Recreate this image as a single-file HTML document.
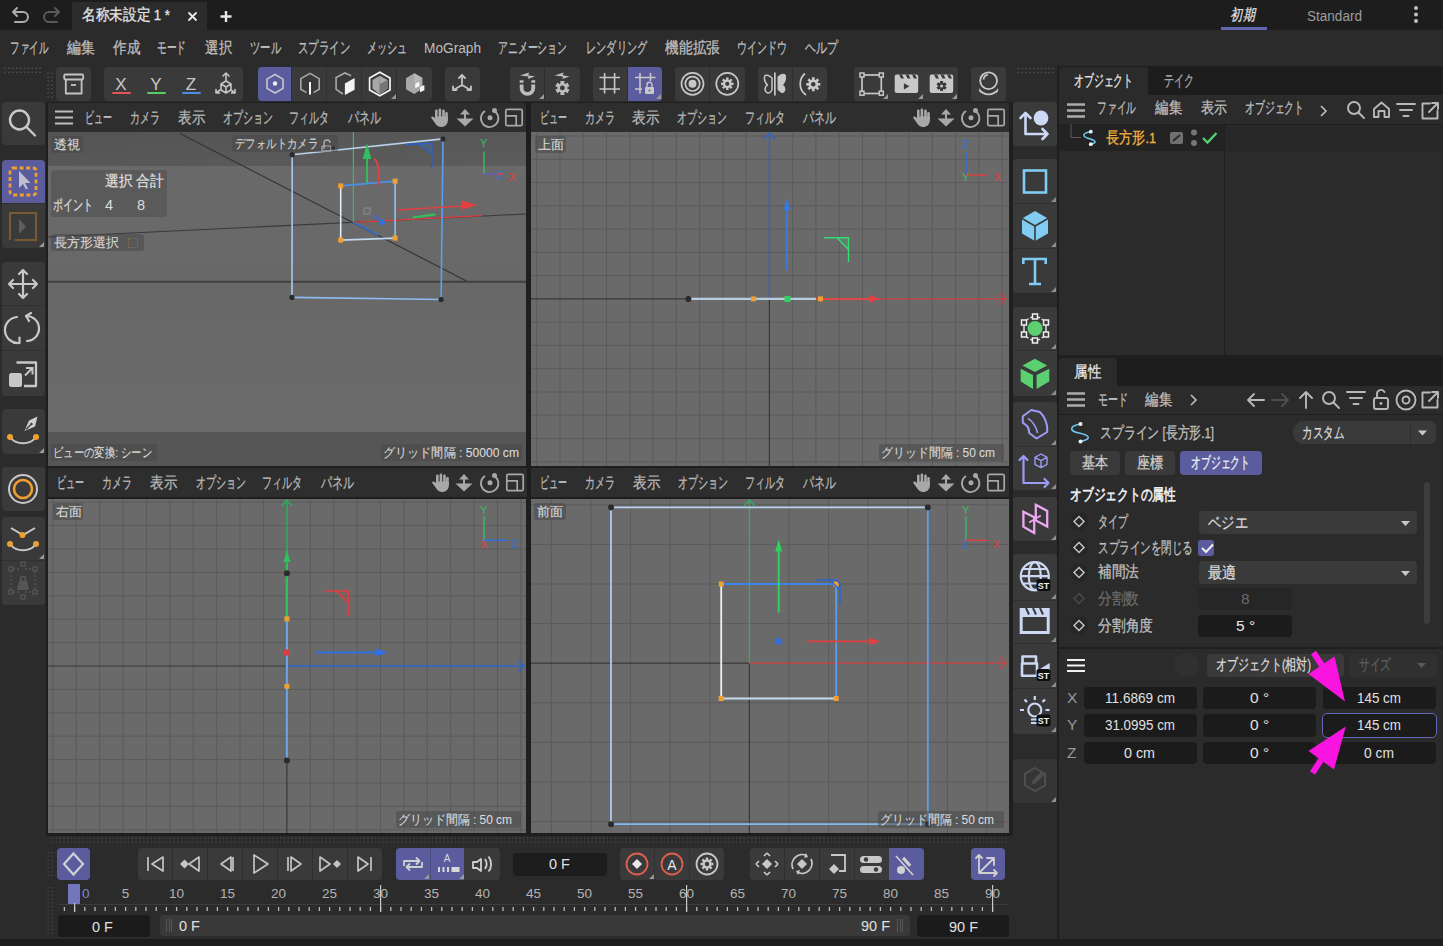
<!DOCTYPE html>
<html><head><meta charset="utf-8">
<style>
*{box-sizing:border-box;margin:0;padding:0}
html,body{width:1443px;height:946px;overflow:hidden;background:#2b2b2b;font-family:"Liberation Sans",sans-serif;color:#bebebe;font-size:15.5px}
.a{position:absolute}
.t{position:absolute;white-space:nowrap;line-height:14px;transform-origin:0 50%;-webkit-text-stroke:0.3px currentColor}
svg{position:absolute;overflow:visible}
.grp{position:absolute;background:#3a3a3a;border-radius:4px;overflow:hidden}
.act{position:absolute;top:0;bottom:0;background:#5a5c9e}
.sep{position:absolute;top:0;bottom:0;width:1px;background:#303030}
.vh{position:absolute;background:#2e2e2e;height:29px}
.vc{position:absolute;background:#666;overflow:hidden}
.fw{width:var(--w);overflow:hidden;height:20px;margin-top:-3px;padding-top:3px}
.lbl .t{-webkit-text-stroke:0.1px currentColor}
.lbl{position:absolute;background:rgba(70,70,70,.5);border-radius:3px;color:#dadada;font-size:13px;line-height:17px;height:17px;padding:0 3px;white-space:nowrap}
.corner{position:absolute;width:0;height:0;border-style:solid;border-width:0 0 6px 6px;border-color:transparent transparent #9a9a9a transparent}
</style></head>
<body>
<!-- TITLE BAR -->
<div class="a" style="left:0;top:0;width:1443px;height:30px;background:#1d1d1d"></div>
<div class="a" style="left:72px;top:2px;width:135px;height:28px;background:#2b2b2b"></div>
<svg style="left:0;top:0" width="240" height="30">
 <g fill="none" stroke="#acacac" stroke-width="2" stroke-linecap="round" stroke-linejoin="round">
  <path d="M14 12 h9 a5 5 0 0 1 0 10 h-8"/><path d="M17 8 l-4 4 l4 4"/>
 </g>
 <g fill="none" stroke="#5a5a5a" stroke-width="2" stroke-linecap="round" stroke-linejoin="round">
  <path d="M58 12 h-9 a5 5 0 0 0 0 10 h8"/><path d="M55 8 l4 4 l-4 4"/>
 </g>
 <path d="M189 13 l7 7 M196 13 l-7 7" stroke="#e8e8e8" stroke-width="1.8" stroke-linecap="round"/>
 <path d="M226 11 v11 M220.5 16.5 h11" stroke="#e8e8e8" stroke-width="2.4"/>
</svg>
<div class="t fw" style="left:82px;top:8px;font-size:15.5px;color:#e4e4e4;--w:88px">名称未設定 1 *</div>
<div class="a" style="left:1231px;top:8px;width:30px;height:16px;transform:skewX(-12deg)"><div class="t fw" style="left:0;top:0;font-size:15.5px;color:#e0e0e0;--w:28px">初期</div></div>
<div class="a" style="left:1221px;top:27px;width:46px;height:3px;background:#6468b4"></div>
<div class="t fw" style="left:1307px;top:9px;font-size:15.5px;color:#9c9c9c;--w:55px;-webkit-text-stroke:0">Standard</div>
<svg style="left:1410px;top:4px" width="12" height="22"><g fill="#c0c0c0"><circle cx="6" cy="4" r="2"/><circle cx="6" cy="10.5" r="2"/><circle cx="6" cy="17" r="2"/></g></svg>

<!-- MENU BAR -->
<div class="a" style="left:0;top:30px;width:1443px;height:36px;background:#2b2b2b"></div>
<div class="t fw" style="left:10px;top:41px;--w:38px">ファイル</div>
<div class="t fw" style="left:67px;top:41px;--w:28px">編集</div>
<div class="t fw" style="left:113px;top:41px;--w:27px">作成</div>
<div class="t fw" style="left:157px;top:41px;--w:29px">モード</div>
<div class="t fw" style="left:205px;top:41px;--w:27px">選択</div>
<div class="t fw" style="left:250px;top:41px;--w:31px">ツール</div>
<div class="t fw" style="left:298px;top:41px;--w:52px">スプライン</div>
<div class="t fw" style="left:367px;top:41px;--w:40px">メッシュ</div>
<div class="t fw" style="left:424px;top:41px;--w:57px">MoGraph</div>
<div class="t fw" style="left:498px;top:41px;--w:69px">アニメーション</div>
<div class="t fw" style="left:586px;top:41px;--w:61px">レンダリング</div>
<div class="t fw" style="left:665px;top:41px;--w:55px">機能拡張</div>
<div class="t fw" style="left:737px;top:41px;--w:50px">ウインドウ</div>
<div class="t fw" style="left:805px;top:41px;--w:33px">ヘルプ</div>
<!-- TOOLBAR -->
<div class="a" style="left:0;top:66px;width:1443px;height:37px;background:#2b2b2b"></div>
<svg style="left:0;top:64px" width="1060" height="40">
 <g fill="#4e4e4e">
  <path d="M4.30 3.6h1.5v1.5h-1.5zM4.30 7.6h1.5v1.5h-1.5zM8.20 3.6h1.5v1.5h-1.5zM8.20 7.6h1.5v1.5h-1.5zM12.10 3.6h1.5v1.5h-1.5zM12.10 7.6h1.5v1.5h-1.5zM16.00 3.6h1.5v1.5h-1.5zM16.00 7.6h1.5v1.5h-1.5zM19.90 3.6h1.5v1.5h-1.5zM19.90 7.6h1.5v1.5h-1.5zM23.80 3.6h1.5v1.5h-1.5zM23.80 7.6h1.5v1.5h-1.5zM27.70 3.6h1.5v1.5h-1.5zM27.70 7.6h1.5v1.5h-1.5zM31.60 3.6h1.5v1.5h-1.5zM31.60 7.6h1.5v1.5h-1.5zM35.50 3.6h1.5v1.5h-1.5zM35.50 7.6h1.5v1.5h-1.5zM39.40 3.6h1.5v1.5h-1.5zM39.40 7.6h1.5v1.5h-1.5zM47.3 8.5h1.5v1.5h-1.5zM51.3 8.5h1.5v1.5h-1.5zM47.3 12.4h1.5v1.5h-1.5zM51.3 12.4h1.5v1.5h-1.5zM47.3 16.3h1.5v1.5h-1.5zM51.3 16.3h1.5v1.5h-1.5zM47.3 20.2h1.5v1.5h-1.5zM51.3 20.2h1.5v1.5h-1.5zM47.3 24.1h1.5v1.5h-1.5zM51.3 24.1h1.5v1.5h-1.5zM47.3 28.0h1.5v1.5h-1.5zM51.3 28.0h1.5v1.5h-1.5zM47.3 31.9h1.5v1.5h-1.5zM51.3 31.9h1.5v1.5h-1.5zM1017.80 3.8h1.5v1.5h-1.5zM1017.80 7.8h1.5v1.5h-1.5zM1021.63 3.8h1.5v1.5h-1.5zM1021.63 7.8h1.5v1.5h-1.5zM1025.46 3.8h1.5v1.5h-1.5zM1025.46 7.8h1.5v1.5h-1.5zM1029.29 3.8h1.5v1.5h-1.5zM1029.29 7.8h1.5v1.5h-1.5zM1033.12 3.8h1.5v1.5h-1.5zM1033.12 7.8h1.5v1.5h-1.5zM1036.95 3.8h1.5v1.5h-1.5zM1036.95 7.8h1.5v1.5h-1.5zM1040.78 3.8h1.5v1.5h-1.5zM1040.78 7.8h1.5v1.5h-1.5zM1044.61 3.8h1.5v1.5h-1.5zM1044.61 7.8h1.5v1.5h-1.5zM1048.44 3.8h1.5v1.5h-1.5zM1048.44 7.8h1.5v1.5h-1.5zM1052.27 3.8h1.5v1.5h-1.5zM1052.27 7.8h1.5v1.5h-1.5z"/>
 </g>
</svg>
<div class="grp" style="left:56px;top:67px;width:35px;height:34px"></div>
<div class="grp" style="left:104px;top:67px;width:139px;height:34px"></div>
<div class="grp" style="left:258px;top:67px;width:174px;height:34px"><div class="act" style="left:0;width:33px"></div><div class="sep" style="left:33px"></div><div class="sep" style="left:68px"></div><div class="sep" style="left:103px"></div><div class="sep" style="left:138px"></div></div>
<div class="grp" style="left:445px;top:67px;width:35px;height:34px"></div>
<div class="grp" style="left:510px;top:67px;width:70px;height:34px"><div class="sep" style="left:34px"></div></div>
<div class="grp" style="left:593px;top:67px;width:69px;height:34px"><div class="act" style="left:34px;width:35px"></div><div class="sep" style="left:34px"></div></div>
<div class="grp" style="left:675px;top:67px;width:70px;height:34px"><div class="sep" style="left:34px"></div></div>
<div class="grp" style="left:758px;top:67px;width:69px;height:34px"><div class="sep" style="left:34px"></div></div>
<div class="grp" style="left:854px;top:67px;width:104px;height:34px"></div>
<div class="grp" style="left:971px;top:67px;width:35px;height:34px"></div>
<svg style="left:0;top:64px" width="1060" height="40">
 <g fill="none" stroke="#c4c4c4" stroke-width="1.8" stroke-linejoin="round">
  <!-- archive -->
  <rect x="64.2" y="10.5" width="19" height="5" rx="1.2"/><path d="M65.8 15.5v14h15.8v-14"/><path d="M71 21h5"/>
 </g>
 <!-- XYZ -->
 <g font-family="Liberation Sans" font-size="17" fill="#c8c8c8" text-anchor="middle">
  <text x="121" y="26">X</text><text x="156" y="26">Y</text><text x="191" y="26">Z</text>
 </g>
 <rect x="112" y="28" width="19" height="2" rx="1" fill="#e05555"/>
 <rect x="147" y="28" width="19" height="2" rx="1" fill="#55cc66"/>
 <rect x="182" y="28" width="19" height="2" rx="1" fill="#4a8fe0"/>
 <g fill="none" stroke="#c4c4c4" stroke-width="1.6" stroke-linejoin="round" stroke-linecap="round">
  <path d="M226 9v8M223 12l3-3 3 3"/>
  <path d="M221 20l5-3 5 3v6l-5 3-5-3z M221 20l5 3 5-3 M226 23v6"/>
  <path d="M220 26l-4 3M231 26l4 3M216 29h3.5M216 29v-3.5M235 29h-3.5M235 29v-3.5"/>
 </g>
 <!-- mode icons -->
 <g fill="none" stroke="#c8c8c8" stroke-width="1.6">
  <path d="M275 10.5l8 4.6v9.3l-8 4.6-8-4.6v-9.3z"/>
 </g>
 <circle cx="275" cy="19.5" r="2.2" fill="#f0f0f0"/>
 <g fill="none" stroke="#a8a8a8" stroke-width="1.6">
  <path d="M306.5 28.6L300.8 25.3V14.6L310 9.3L319.2 14.6V25.3L313.5 28.6"/>
  <path d="M351.2 11.7L344.9 9L336.1 13.6V25.3L342.9 30"/>
 </g>
 <rect x="309" y="18" width="2" height="12.6" fill="#f4f4f4"/>
 <path d="M344.9 19.5L354.6 14.1V25.8L344.9 31.1z" fill="#f4f4f4"/>
 <path d="M379.8 8.2L390 14.1V25.9L379.8 31.8L369.6 25.9V14.1z" fill="none" stroke="#f4f4f4" stroke-width="1.7"/>
 <path d="M379.8 11.7L372.5 15.9V24.4L379.8 30.6z" fill="#a8a8a8"/><path d="M379.8 11.7L387.5 15.9V24.4L379.8 30.6z" fill="#a8a8a8"/>
 <path d="M379.8 20L387.5 15.9V24.4L379.8 30.6z" fill="#767676"/>
 <path d="M414.3 9.3L422.5 14V24.6L414.3 30.1L406 25.3V14.3z" fill="#a8a8a8"/>
 <path d="M415.2 19.5L419.5 17.5V22.3L415.2 24.3z" fill="#f4f4f4"/><path d="M420 22.9L424.4 20.9V26.2L420 28.2z" fill="#f4f4f4"/>
 <path d="M414.3 9.3L422.5 14L414.3 18.7z" fill="#b8b8b8"/>
 <!-- axis -->
 <g fill="none" stroke="#c4c4c4" stroke-width="1.8" stroke-linecap="round" stroke-linejoin="round">
  <path d="M462 11v10l-8.5 5M462 21l8.5 5M459 14l3-3 3 3M453 22.5v3.5h3.5M471 22.5v3.5h-3.5"/>
 </g>
 <!-- magnet -->
 <path d="M521.6 20.4v3.6a5.8 5.8 0 0 0 11.6 0v-3.6" fill="none" stroke="#bdbdbd" stroke-width="3.8"/>
 <path d="M519.7 16.3h3.8v2.4h-3.8zM531.4 16.3h3.8v2.4h-3.8z" fill="#bdbdbd"/>
 <path d="M520 11.6L529 8.5L528.3 11.2L535 12.6L527.8 15L528.5 12.6z" fill="#bdbdbd"/>
 <path d="M564.22 28.56 L564.47 30.90 L560.33 30.90 L560.58 28.56 L559.27 27.80 L557.38 29.20 L555.30 25.60 L557.46 24.66 L557.46 23.14 L555.30 22.20 L557.38 18.60 L559.27 20.00 L560.58 19.24 L560.33 16.90 L564.47 16.90 L564.22 19.24 L565.53 20.00 L567.42 18.60 L569.50 22.20 L567.34 23.14 L567.34 24.66 L569.50 25.60 L567.42 29.20 L565.53 27.80zM564.8 23.9a2.4 2.4 0 1 0 -4.8 0a2.4 2.4 0 1 0 4.8 0z" fill="#bdbdbd" fill-rule="evenodd"/>
 <path d="M554.5 11.6L563.5 8.5L562.8 11.2L569.5 12.6L562.3 15L563 12.6z" fill="#bdbdbd"/>
 <!-- grid -->
 <g stroke="#c8c8c8" stroke-width="1.6" fill="none">
  <path d="M599.5 13.5h20.5M599.5 25h20.5M604.6 9v20.5M614.6 9v20.5"/>
  <path d="M635 13.5h20.5M635 25h7M640 9v20.5M650.5 9v8"/>
 </g>
 <rect x="645" y="23" width="9" height="7" rx="1" fill="#c8c8c8"/><path d="M647 23v-2.2a2.5 2.5 0 0 1 5 0v2.2" fill="none" stroke="#c8c8c8" stroke-width="1.4"/><circle cx="649.5" cy="26.5" r="1" fill="#5a5c9e"/>
 <!-- rings -->
 <g fill="none" stroke="#c8c8c8" stroke-width="1.7">
  <circle cx="692.5" cy="19.8" r="11"/><circle cx="692.5" cy="19.8" r="7.2"/>
  <circle cx="727.3" cy="19.8" r="11"/>
 </g>
 <circle cx="692.5" cy="19.8" r="4" fill="#c8c8c8"/>
 <path d="M731.55 18.67 L733.58 18.55 L733.58 21.05 L731.55 20.93 L731.10 22.01 L732.62 23.36 L730.86 25.12 L729.51 23.60 L728.43 24.05 L728.55 26.08 L726.05 26.08 L726.17 24.05 L725.09 23.60 L723.74 25.12 L721.98 23.36 L723.50 22.01 L723.05 20.93 L721.02 21.05 L721.02 18.55 L723.05 18.67 L723.50 17.59 L721.98 16.24 L723.74 14.48 L725.09 16.00 L726.17 15.55 L726.05 13.52 L728.55 13.52 L728.43 15.55 L729.51 16.00 L730.86 14.48 L732.62 16.24 L731.10 17.59zM729.4 19.8a2.1 2.1 0 1 0 -4.2 0a2.1 2.1 0 1 0 4.2 0z" fill="#c8c8c8" fill-rule="evenodd"/>
 <!-- symmetry -->
 <rect x="774" y="8.5" width="1.7" height="23" fill="#c8c8c8"/>
 <path d="M772 14c-3-3-7-4-7.5-1s1 6 3 8c-2 1-3 4-2 6s3 3 5 1c1-1 1.5-2 1.5-3z" fill="none" stroke="#c8c8c8" stroke-width="1.5" stroke-linejoin="round"/>
 <path d="M777.5 13c2-3 8-5 8.5-1s-1 7-3 9c2 1 3 4 2 6s-3 3-5 1c-1-1-2.5-2-2.5-3z" fill="#c8c8c8"/>
 <path d="M805 9.5c-6 5-7 16 1 21.5" fill="none" stroke="#c8c8c8" stroke-width="1.7"/>
 <path d="M818.13 19.02 L820.36 18.90 L820.36 21.70 L818.13 21.58 L817.62 22.81 L819.29 24.30 L817.30 26.29 L815.81 24.62 L814.58 25.13 L814.70 27.36 L811.90 27.36 L812.02 25.13 L810.79 24.62 L809.30 26.29 L807.31 24.30 L808.98 22.81 L808.47 21.58 L806.24 21.70 L806.24 18.90 L808.47 19.02 L808.98 17.79 L807.31 16.30 L809.30 14.31 L810.79 15.98 L812.02 15.47 L811.90 13.24 L814.70 13.24 L814.58 15.47 L815.81 15.98 L817.30 14.31 L819.29 16.30 L817.62 17.79zM815.5999999999999 20.3a2.3 2.3 0 1 0 -4.6 0a2.3 2.3 0 1 0 4.6 0z" fill="#c8c8c8" fill-rule="evenodd"/>
 <!-- render -->
 <g fill="none" stroke="#c8c8c8" stroke-width="1.7"><rect x="862" y="11" width="19.3" height="18.5"/></g>
 <g fill="#3a3a3a" stroke="#c8c8c8" stroke-width="1.5"><rect x="860" y="9" width="4" height="4"/><rect x="879.3" y="9" width="4" height="4"/><rect x="860" y="27.2" width="4" height="4"/><rect x="879.3" y="27.2" width="4" height="4"/></g>
 <rect x="894.7" y="10.6" width="23.5" height="18.3" rx="2" fill="#c8c8c8"/>
 <path d="M899 10.6h3l2 4h-3zM905.5 10.6h3l2 4h-3zM912 10.6h3l2 4h-3z" fill="#3a3a3a"/>
 <path d="M903.9 19.2l5.6 3.1-5.6 3.1z" fill="#3a3a3a"/>
 <rect x="929.7" y="10.6" width="23.5" height="18.3" rx="2" fill="#c8c8c8"/>
 <path d="M934 10.6h3l2 4h-3zM940.5 10.6h3l2 4h-3zM947 10.6h3l2 4h-3z" fill="#3a3a3a"/>
 <path d="M942.94 25.45 L943.11 27.08 L940.09 27.08 L940.26 25.45 L939.29 24.89 L937.95 25.84 L936.45 23.24 L937.94 22.56 L937.94 21.44 L936.45 20.76 L937.95 18.16 L939.29 19.11 L940.26 18.55 L940.09 16.92 L943.11 16.92 L942.94 18.55 L943.91 19.11 L945.25 18.16 L946.75 20.76 L945.26 21.44 L945.26 22.56 L946.75 23.24 L945.25 25.84 L943.91 24.89zM943.1 22a1.5 1.5 0 1 0 -3.0 0a1.5 1.5 0 1 0 3.0 0z" fill="#3a3a3a" fill-rule="evenodd"/>
 <!-- sphere -->
 <g fill="none" stroke="#c8c8c8" stroke-width="1.8"><circle cx="988.6" cy="16.7" r="8.4"/><path d="M983.5 15.5a5.5 5.5 0 0 1 4.5-4.8"/></g>
 <path d="M979 24.2Q988.6 35 998.2 24.2Q998.5 27 997 28.5Q988.6 34 980.2 28.5Q978.7 27 979 24.2z" fill="#c8c8c8"/>
 <!-- corner marks -->
 <path d="M391 35l5-5v5z M539 35l5-5v5z M656 35l5-5v5z M883 35l5-5v5z M918 35l5-5v5z M952 35l5-5v5z" fill="#9a9a9a"/>
</svg>
<!-- LEFT TOOLBAR -->
<div class="a" style="left:0;top:103px;width:47px;height:835px;background:#2b2b2b"></div>
<div class="grp" style="left:2px;top:102px;width:43px;height:43px"></div>
<div class="grp" style="left:2px;top:160px;width:43px;height:88px"><div class="act" style="left:0;right:0;top:0;bottom:auto;height:43px"></div><div class="a" style="left:0;right:0;top:43px;height:1px;background:#303030"></div></div>
<div class="grp" style="left:2px;top:262px;width:43px;height:134px"><div class="a" style="left:0;right:0;top:43px;height:1px;background:#303030"></div><div class="a" style="left:0;right:0;top:88px;height:1px;background:#303030"></div></div>
<div class="grp" style="left:2px;top:409px;width:43px;height:45px"></div>
<div class="grp" style="left:2px;top:467px;width:43px;height:44px"></div>
<div class="grp" style="left:2px;top:517px;width:43px;height:88px"><div class="a" style="left:0;right:0;top:43px;height:1px;background:#303030"></div></div>
<svg style="left:0;top:0" width="47" height="620">
 <g fill="none" stroke="#c8c8c8" stroke-width="2.4" stroke-linecap="round">
  <circle cx="19.5" cy="120" r="9.5"/><path d="M26.5 127l8.5 8.5"/>
 </g>
 <!-- select -->
 <rect x="10" y="168" width="26" height="27" rx="3" fill="none" stroke="#f0a030" stroke-width="2.8" stroke-dasharray="4 2.6"/>
 <path d="M19 171v17l4-4 3 5.5 2-1-3-5.5h5.5z" fill="#c0c0cc"/>
 <g fill="none" stroke="#7a5a30" stroke-width="2"><path d="M10 240V213h27M36 213v27H15"/></g>
 <path d="M19 219v15l7-7.5z" fill="#5e5e5e"/>
 <!-- move -->
 <g fill="none" stroke="#c8c8c8" stroke-width="2.2" stroke-linecap="round" stroke-linejoin="round">
  <path d="M23 270v28M9 284h28M19 274l4-4 4 4M19 294l4 4 4-4M13 280l-4 4 4 4M33 280l4 4-4 4"/>
 </g>
 <!-- rotate -->
 <g fill="none" stroke="#c8c8c8" stroke-width="2.2" stroke-linecap="round" stroke-linejoin="round">
  <path d="M17 317a12 12 0 0 0 2 26M27 341a12 12 0 0 0 -1 -25"/><path d="M14 343h5.5v-5.5M31 313l-5 3 3 5" />
 </g>
 <!-- scale -->
 <path d="M16.5 362.5h19.5v23.5h-12" fill="none" stroke="#c8c8c8" stroke-width="2.3" stroke-linejoin="round"/>
 <rect x="9" y="373" width="13" height="14" rx="2.5" fill="#c8c8c8"/>
 <path d="M25 375.5l7-7M26 368h6.5v6.5" fill="none" stroke="#c8c8c8" stroke-width="2"/>
 <!-- pen -->
 <path d="M37.5 416.5L29 420.5L24.5 431L35 426.5z" fill="#d0d0d0"/>
 <path d="M26 429.5l5-5" stroke="#3a3a3a" stroke-width="1.2"/><circle cx="31.5" cy="424" r="1.2" fill="#3a3a3a"/>
 <path d="M11 438c5 7 19 7 24 0" fill="none" stroke="#c8c8c8" stroke-width="2"/>
 <circle cx="10" cy="437" r="3" fill="#f0a030"/><circle cx="36" cy="437" r="3" fill="#f0a030"/>
 <!-- ring -->
 <circle cx="23" cy="489" r="14" fill="none" stroke="#c8c8c8" stroke-width="2"/>
 <circle cx="23" cy="489" r="9" fill="none" stroke="#f0a030" stroke-width="2.6"/>
 <!-- bezier -->
 <path d="M11 528l12 7 12-7" fill="none" stroke="#c8c8c8" stroke-width="2"/>
 <circle cx="22.5" cy="535" r="3" fill="#f0a030"/>
 <path d="M11 545c5 7 19 7 24 0" fill="none" stroke="#c8c8c8" stroke-width="2"/>
 <circle cx="10" cy="544" r="3" fill="#f0a030"/><circle cx="36" cy="544" r="3" fill="#f0a030"/>
 <!-- weight (dim) -->
 <g fill="none" stroke="#555" stroke-width="1.3"><rect x="9" y="567" width="4" height="4"/><rect x="33" y="567" width="4" height="4"/><rect x="9" y="590" width="4" height="4"/><rect x="33" y="590" width="4" height="4"/><rect x="21" y="562" width="4" height="4"/><rect x="21" y="595" width="4" height="4"/><path d="M11 571v19M35 571v19M13 569h8M25 569h8M13 592h8M25 592h8" stroke-dasharray="2 2"/></g>
 <path d="M17 590l2-9h8l2 9z" fill="#555"/><circle cx="23" cy="579" r="2.5" fill="none" stroke="#555" stroke-width="1.5"/>
 <path d="M39 247l5-5v5z M39 453l5-5v5z M39 559l5-5v5z" fill="#9a9a9a"/>
</svg>
<!-- VIEWPORTS -->
<div class="a" style="left:46px;top:102px;width:964px;height:734px;background:#1e1e1e"></div>
<div class="vh" style="left:48px;top:103px;width:478px"></div>
<div class="t fw" style="left:85px;top:110.5px;font-size:15.5px;color:#b8b8b8;--w:27px">ビュー</div>
<div class="t fw" style="left:130px;top:110.5px;font-size:15.5px;color:#b8b8b8;--w:30px">カメラ</div>
<div class="t fw" style="left:178px;top:110.5px;font-size:15.5px;color:#b8b8b8;--w:27px">表示</div>
<div class="t fw" style="left:223px;top:110.5px;font-size:15.5px;color:#b8b8b8;--w:50px">オプション</div>
<div class="t fw" style="left:289px;top:110.5px;font-size:15.5px;color:#b8b8b8;--w:40px">フィルタ</div>
<div class="t fw" style="left:348px;top:110.5px;font-size:15.5px;color:#b8b8b8;--w:33px">パネル</div>
<svg style="left:0;top:0" width="1" height="1"><path d="M55 111.5h18M55 117.5h18M55 123.5h18" stroke="#bdbdbd" stroke-width="2.2"/><g transform="translate(430 108.5)" fill="#a8a8a8"><rect x="5" y="1" width="2.6" height="10" rx="1.3"/><rect x="8.6" y="0" width="2.6" height="10" rx="1.3"/><rect x="12.2" y="1" width="2.6" height="10" rx="1.3"/><rect x="15.2" y="3.5" width="2.6" height="9" rx="1.3"/><path d="M5 8h12.8v4c0 4-3 6.5-6.5 6.5c-3 0-4.5-1.5-6-3.5l-4-5.5c-.6-.9.5-2 1.6-1.4l3 2z"/></g><path d="M465 109.0l-5 5.5h10z" fill="#a8a8a8"/><rect x="464" y="114.0" width="2" height="6" fill="#a8a8a8"/><path d="M456.5 118.5h17l-8.5 8z" fill="#a8a8a8"/><path d="M485 111.0a8.7 8.7 0 1 0 10 0.5" fill="none" stroke="#a8a8a8" stroke-width="1.8"/><circle cx="494.5" cy="110.5" r="2.5" fill="#a8a8a8"/><circle cx="490" cy="117.8" r="2.5" fill="#a8a8a8"/><rect x="505.8" y="109.3" width="16.4" height="16.4" rx="1.5" fill="none" stroke="#a8a8a8" stroke-width="1.7"/><path d="M506 115.9h10.2v9.6" fill="none" stroke="#a8a8a8" stroke-width="1.7"/></svg>
<div class="vh" style="left:531px;top:103px;width:478px"></div>
<div class="t fw" style="left:540px;top:110.5px;font-size:15.5px;color:#b8b8b8;--w:27px">ビュー</div>
<div class="t fw" style="left:585px;top:110.5px;font-size:15.5px;color:#b8b8b8;--w:30px">カメラ</div>
<div class="t fw" style="left:632px;top:110.5px;font-size:15.5px;color:#b8b8b8;--w:27px">表示</div>
<div class="t fw" style="left:677px;top:110.5px;font-size:15.5px;color:#b8b8b8;--w:50px">オプション</div>
<div class="t fw" style="left:745px;top:110.5px;font-size:15.5px;color:#b8b8b8;--w:40px">フィルタ</div>
<div class="t fw" style="left:803px;top:110.5px;font-size:15.5px;color:#b8b8b8;--w:33px">パネル</div>
<svg style="left:0;top:0" width="1" height="1"><g transform="translate(912 108.5)" fill="#a8a8a8"><rect x="5" y="1" width="2.6" height="10" rx="1.3"/><rect x="8.6" y="0" width="2.6" height="10" rx="1.3"/><rect x="12.2" y="1" width="2.6" height="10" rx="1.3"/><rect x="15.2" y="3.5" width="2.6" height="9" rx="1.3"/><path d="M5 8h12.8v4c0 4-3 6.5-6.5 6.5c-3 0-4.5-1.5-6-3.5l-4-5.5c-.6-.9.5-2 1.6-1.4l3 2z"/></g><path d="M946 109.0l-5 5.5h10z" fill="#a8a8a8"/><rect x="945" y="114.0" width="2" height="6" fill="#a8a8a8"/><path d="M937.5 118.5h17l-8.5 8z" fill="#a8a8a8"/><path d="M966 111.0a8.7 8.7 0 1 0 10 0.5" fill="none" stroke="#a8a8a8" stroke-width="1.8"/><circle cx="975.5" cy="110.5" r="2.5" fill="#a8a8a8"/><circle cx="971" cy="117.8" r="2.5" fill="#a8a8a8"/><rect x="987.8" y="109.3" width="16.4" height="16.4" rx="1.5" fill="none" stroke="#a8a8a8" stroke-width="1.7"/><path d="M988 115.9h10.2v9.6" fill="none" stroke="#a8a8a8" stroke-width="1.7"/></svg>
<div class="vh" style="left:48px;top:468px;width:479px"></div>
<div class="t fw" style="left:57px;top:475.5px;font-size:15.5px;color:#b8b8b8;--w:27px">ビュー</div>
<div class="t fw" style="left:102px;top:475.5px;font-size:15.5px;color:#b8b8b8;--w:30px">カメラ</div>
<div class="t fw" style="left:150px;top:475.5px;font-size:15.5px;color:#b8b8b8;--w:27px">表示</div>
<div class="t fw" style="left:196px;top:475.5px;font-size:15.5px;color:#b8b8b8;--w:50px">オプション</div>
<div class="t fw" style="left:262px;top:475.5px;font-size:15.5px;color:#b8b8b8;--w:40px">フィルタ</div>
<div class="t fw" style="left:321px;top:475.5px;font-size:15.5px;color:#b8b8b8;--w:33px">パネル</div>
<svg style="left:0;top:0" width="1" height="1"><g transform="translate(431 473.5)" fill="#a8a8a8"><rect x="5" y="1" width="2.6" height="10" rx="1.3"/><rect x="8.6" y="0" width="2.6" height="10" rx="1.3"/><rect x="12.2" y="1" width="2.6" height="10" rx="1.3"/><rect x="15.2" y="3.5" width="2.6" height="9" rx="1.3"/><path d="M5 8h12.8v4c0 4-3 6.5-6.5 6.5c-3 0-4.5-1.5-6-3.5l-4-5.5c-.6-.9.5-2 1.6-1.4l3 2z"/></g><path d="M464 474.0l-5 5.5h10z" fill="#a8a8a8"/><rect x="463" y="479.0" width="2" height="6" fill="#a8a8a8"/><path d="M455.5 483.5h17l-8.5 8z" fill="#a8a8a8"/><path d="M485 476.0a8.7 8.7 0 1 0 10 0.5" fill="none" stroke="#a8a8a8" stroke-width="1.8"/><circle cx="494.5" cy="475.5" r="2.5" fill="#a8a8a8"/><circle cx="490" cy="482.8" r="2.5" fill="#a8a8a8"/><rect x="506.8" y="474.3" width="16.4" height="16.4" rx="1.5" fill="none" stroke="#a8a8a8" stroke-width="1.7"/><path d="M507 480.9h10.2v9.6" fill="none" stroke="#a8a8a8" stroke-width="1.7"/></svg>
<div class="vh" style="left:531px;top:468px;width:478px"></div>
<div class="t fw" style="left:540px;top:475.5px;font-size:15.5px;color:#b8b8b8;--w:27px">ビュー</div>
<div class="t fw" style="left:585px;top:475.5px;font-size:15.5px;color:#b8b8b8;--w:30px">カメラ</div>
<div class="t fw" style="left:633px;top:475.5px;font-size:15.5px;color:#b8b8b8;--w:27px">表示</div>
<div class="t fw" style="left:678px;top:475.5px;font-size:15.5px;color:#b8b8b8;--w:50px">オプション</div>
<div class="t fw" style="left:745px;top:475.5px;font-size:15.5px;color:#b8b8b8;--w:40px">フィルタ</div>
<div class="t fw" style="left:803px;top:475.5px;font-size:15.5px;color:#b8b8b8;--w:33px">パネル</div>
<svg style="left:0;top:0" width="1" height="1"><g transform="translate(912 473.5)" fill="#a8a8a8"><rect x="5" y="1" width="2.6" height="10" rx="1.3"/><rect x="8.6" y="0" width="2.6" height="10" rx="1.3"/><rect x="12.2" y="1" width="2.6" height="10" rx="1.3"/><rect x="15.2" y="3.5" width="2.6" height="9" rx="1.3"/><path d="M5 8h12.8v4c0 4-3 6.5-6.5 6.5c-3 0-4.5-1.5-6-3.5l-4-5.5c-.6-.9.5-2 1.6-1.4l3 2z"/></g><path d="M946 474.0l-5 5.5h10z" fill="#a8a8a8"/><rect x="945" y="479.0" width="2" height="6" fill="#a8a8a8"/><path d="M937.5 483.5h17l-8.5 8z" fill="#a8a8a8"/><path d="M966 476.0a8.7 8.7 0 1 0 10 0.5" fill="none" stroke="#a8a8a8" stroke-width="1.8"/><circle cx="975.5" cy="475.5" r="2.5" fill="#a8a8a8"/><circle cx="971" cy="482.8" r="2.5" fill="#a8a8a8"/><rect x="987.8" y="474.3" width="16.4" height="16.4" rx="1.5" fill="none" stroke="#a8a8a8" stroke-width="1.7"/><path d="M988 480.9h10.2v9.6" fill="none" stroke="#a8a8a8" stroke-width="1.7"/></svg>

<div class="vc" style="left:48px;top:132px;width:478px;height:334px;background:#666"></div>
<div class="vc" style="left:531px;top:132px;width:478px;height:334px;background:#6a6a6a"></div>
<div class="vc" style="left:48px;top:499px;width:478px;height:334px;background:#6a6a6a"></div>
<div class="vc" style="left:531px;top:499px;width:478px;height:334px;background:#6a6a6a"></div>
<svg style="left:0;top:0" width="1443" height="946">
 <defs>
  <clipPath id="cp1"><rect x="48" y="132" width="478" height="334"/></clipPath>
  <clipPath id="cp2"><rect x="531" y="132" width="478" height="334"/></clipPath>
  <clipPath id="cp3"><rect x="48" y="499" width="478" height="334"/></clipPath>
  <clipPath id="cp4"><rect x="531" y="499" width="478" height="334"/></clipPath>
  <linearGradient id="pg1" x1="0" y1="0" x2="1" y2="1">
   <stop offset="0" stop-color="#545454"/><stop offset="1" stop-color="#5c5c5c"/>
  </linearGradient>
  <linearGradient id="pg2" x1="0" y1="0" x2="0" y2="1">
   <stop offset="0" stop-color="#6a6a6a"/><stop offset="0.5" stop-color="#686868"/><stop offset="1" stop-color="#6c6c6c"/>
  </linearGradient>
 </defs>
 <!-- PERSPECTIVE -->
 <g clip-path="url(#cp1)">
  <rect x="48" y="132" width="478" height="334" fill="url(#pg2)"/>
  <rect x="48" y="132" width="478" height="34" fill="url(#pg1)"/>
  <rect x="48" y="432" width="478" height="34" fill="#565656"/>
  <path d="M48 281.8H526" stroke="#404040" stroke-width="2"/>
  <path d="M180 133.6L466.5 281" stroke="#333" stroke-width="1.1"/>
  <path d="M48 237L526 214" stroke="#3a3a3a" stroke-width="1.1"/>
  <path d="M353.4 132V222.3" stroke="#35c060" stroke-width="1.2"/>
  <path d="M353.4 222.3L482 215.6" stroke="#e04040" stroke-width="1.2"/>
  <path d="M353.4 222.3L378 235" stroke="#3070e0" stroke-width="1.5"/>
  <g fill="none" stroke-width="1.6">
   <path d="M292.2 154.7L443 138.9" stroke="#b8d0e8"/>
   <path d="M443 138.9L441.1 299.5" stroke="#5aa0ee"/>
   <path d="M441.1 299.5L292 297.4" stroke="#8cbcf0"/>
   <path d="M292 297.4L292.2 154.7" stroke="#a8c8ee"/>
   <path d="M340.7 185.9L395.1 181.1" stroke="#4a90e8"/>
   <path d="M395.1 181.1L395.1 238.1" stroke="#90c0f0"/>
   <path d="M395.1 238.1L340.7 240.1" stroke="#c0d8f0"/>
   <path d="M340.7 240.1L340.7 185.9" stroke="#e0ecf8"/>
  </g>
  <g fill="#2a2a2a"><circle cx="292.2" cy="154.7" r="2.6"/><circle cx="443" cy="138.9" r="2.6"/><circle cx="441.1" cy="299.5" r="2.6"/><circle cx="292" cy="297.4" r="2.6"/></g>
  <g fill="#f0a030"><rect x="338.2" y="183.4" width="5" height="5"/><rect x="392.6" y="178.6" width="5" height="5"/><rect x="392.6" y="235.6" width="5" height="5"/><rect x="338.2" y="237.6" width="5" height="5"/></g>
  <path d="M367 183V155" stroke="#30c060" stroke-width="1.8"/><path d="M367 143l-4.3 16h8.6z" fill="#30c060"/>
  <path d="M374.5 158.5c3 3 4.5 8 4.3 26.5" fill="none" stroke="#e04040" stroke-width="2"/>
  <path d="M397 210L462 206" stroke="#e04040" stroke-width="1.6"/><path d="M477.5 205l-16-4.5v9.5z" fill="#e04040"/>
  <path d="M412.6 217.5L435.4 214.4" stroke="#30c060" stroke-width="2.2"/>
  <path d="M373 215.1L382 222.3" stroke="#3070e0" stroke-width="1.6"/><circle cx="382.1" cy="222.3" r="2.8" fill="#3070e0"/>
  <rect x="364" y="208" width="6" height="6" fill="none" stroke="#8a8a8a" stroke-width="1.1"/>
  <g fill="none" stroke="#2860d0" stroke-width="1.5"><path d="M405.4 144.4L431.8 143.2V168.4M419.8 144.4L431.8 154"/></g>
  <path d="M419.8 144.4L431.8 143.2V154z" fill="#4a6aa0" opacity="0.5"/>
  <g font-family="Liberation Sans" font-size="11">
   <text x="480" y="147" fill="#35c060">Y</text>
   <text x="497" y="179" fill="#3070e0">Z</text>
   <text x="509" y="181" fill="#e04040">X</text>
  </g>
  <path d="M484 151.6V173.9" stroke="#35c060" stroke-width="1.4"/><path d="M484 173.9H504" stroke="#e04040" stroke-width="1.4"/><path d="M484 173.9H497" stroke="#3070e0" stroke-width="1.2"/>
 </g>
 <!-- TOP -->
 <g clip-path="url(#cp2)">
  <path d="M536.7 132V466M560.0 132V466M583.2 132V466M606.5 132V466M629.8 132V466M653.0 132V466M676.3 132V466M699.6 132V466M722.9 132V466M746.1 132V466M792.7 132V466M815.9 132V466M839.2 132V466M862.5 132V466M885.8 132V466M909.0 132V466M932.3 132V466M955.6 132V466M978.8 132V466M1002.1 132V466M531 136.0H1008M531 159.3H1008M531 182.5H1008M531 205.8H1008M531 229.1H1008M531 252.4H1008M531 275.6H1008M531 322.2H1008M531 345.4H1008M531 368.7H1008M531 392.0H1008M531 415.2H1008M531 438.5H1008M531 461.8H1008" stroke="#5b5b5b" stroke-width="1"/>
  <path d="M769.4 298.9V466M531 298.9H688" stroke="#383838" stroke-width="1.2"/>
  <path d="M769.4 298.9V133" stroke="#2d64d0" stroke-width="1.4"/><path d="M764 139l5.4-6 5.4 6" fill="none" stroke="#2d64d0" stroke-width="1.3"/>
  <path d="M688.4 298.9H816" stroke="#b8cce0" stroke-width="2.2"/>
  <path d="M816 298.9H1006" stroke="#d04040" stroke-width="1.4"/><path d="M999 293l7 6-7 6" fill="none" stroke="#d04040" stroke-width="1.3"/>
  <path d="M816 298.9H870" stroke="#e04848" stroke-width="2"/><path d="M880 298.9l-11-4.2v8.4z" fill="#e04040"/>
  <circle cx="688.4" cy="298.9" r="3" fill="#2a2a2a"/>
  <rect x="751" y="296.4" width="5" height="5" fill="#f0a030"/><rect x="818" y="296.4" width="5" height="5" fill="#f0a030"/>
  <rect x="784.5" y="296" width="6" height="6" fill="#30d060"/>
  <path d="M787 270V210" stroke="#3a78e0" stroke-width="2"/><path d="M787 198l-3.5 12h7z" fill="#3a78e0"/>
  <path d="M837 237.7L848.5 237.7V249.6z" fill="#5a8a6a" opacity="0.6"/>
  <path d="M824.3 237.7H848.5V261.9M837 237.7L848.5 249.6" fill="none" stroke="#30e070" stroke-width="1.4"/>
  <g font-family="Liberation Sans" font-size="11">
   <text x="962" y="148" fill="#3070e0">Z</text>
   <text x="994" y="181" fill="#e04040">X</text>
   <text x="962" y="181" fill="#35c060">Y</text>
  </g>
  <path d="M966 152V174" stroke="#3070e0" stroke-width="1.4"/><path d="M966 175H988" stroke="#e04040" stroke-width="1.4"/>
 </g>
 <!-- RIGHT -->
 <g clip-path="url(#cp3)">
  <path d="M52.9 499V833M76.3 499V833M99.7 499V833M123.1 499V833M146.5 499V833M169.9 499V833M193.3 499V833M216.7 499V833M240.1 499V833M263.5 499V833M310.3 499V833M333.7 499V833M357.1 499V833M380.5 499V833M403.9 499V833M427.3 499V833M450.7 499V833M474.1 499V833M497.5 499V833M520.9 499V833M48 502.2H526M48 525.6H526M48 549.0H526M48 572.4H526M48 595.8H526M48 619.2H526M48 642.6H526M48 689.4H526M48 712.8H526M48 736.2H526M48 759.6H526M48 783.0H526M48 806.4H526M48 829.8H526" stroke="#5b5b5b" stroke-width="1"/>
  <path d="M286.9 666V833M48 666H286.9" stroke="#383838" stroke-width="1.2"/>
  <path d="M286.9 666V500" stroke="#30b060" stroke-width="1.3"/><path d="M281.5 506l5.4-6 5.4 6" fill="none" stroke="#30b060" stroke-width="1.3"/>
  <path d="M286.9 666H524" stroke="#2d64d0" stroke-width="1.3"/><path d="M518 660l6 6-6 6" fill="none" stroke="#2d64d0" stroke-width="1.3"/>
  <path d="M286.9 573.3V760.4" stroke="#6aa8e8" stroke-width="2"/>
  <path d="M286.9 563V622" stroke="#30c060" stroke-width="2.2"/><path d="M286.9 550l-3.5 12h7z" fill="#30c060"/>
  <circle cx="286.9" cy="573.3" r="3" fill="#2a2a2a"/><circle cx="286.9" cy="760.4" r="3" fill="#2a2a2a"/>
  <rect x="284.4" y="616.4" width="5" height="5" fill="#f0a030"/><rect x="284.4" y="683.8" width="5" height="5" fill="#f0a030"/>
  <rect x="283.9" y="649.6" width="6" height="6" fill="#d84040"/>
  <path d="M315.9 652.6H376" stroke="#3070e0" stroke-width="2"/><path d="M388 652.6l-12-3.8v7.6z" fill="#3070e0"/>
  <path d="M336 591L348.4 591V603z" fill="#8a5a5a" opacity="0.6"/>
  <path d="M324.6 591H348.4V615.7M336 591L348.4 603" fill="none" stroke="#e04040" stroke-width="1.4"/>
  <g font-family="Liberation Sans" font-size="11">
   <text x="480" y="514" fill="#35c060">Y</text>
   <text x="511" y="548" fill="#3070e0">Z</text>
   <text x="480" y="548" fill="#e04040">X</text>
  </g>
  <path d="M484 516.6V540.3" stroke="#35c060" stroke-width="1.4"/><path d="M484 540.3H507" stroke="#3070e0" stroke-width="1.4"/>
 </g>
 <!-- FRONT -->
 <g clip-path="url(#cp4)">
  <path d="M551.4 499V833M591.0 499V833M630.6 499V833M670.2 499V833M709.8 499V833M789.0 499V833M828.6 499V833M868.2 499V833M907.8 499V833M947.4 499V833M987.0 499V833M531 504.8H1008M531 544.4H1008M531 584.0H1008M531 623.6H1008M531 702.8H1008M531 742.4H1008M531 782.0H1008M531 821.6H1008" stroke="#5b5b5b" stroke-width="1"/>
  <path d="M749.4 663.2V833M531 663.2H749.4" stroke="#383838" stroke-width="1.2"/>
  <path d="M749.4 663.2V500" stroke="#30b060" stroke-width="1.3"/><path d="M744 506l5.4-6 5.4 6" fill="none" stroke="#30b060" stroke-width="1.3"/>
  <path d="M749.4 663.2H1006" stroke="#d04040" stroke-width="1.3"/><path d="M1000 657l6 6-6 6" fill="none" stroke="#d04040" stroke-width="1.3"/>
  <g fill="none" stroke-width="1.8">
   <path d="M611 507.4H927.8" stroke="#b8d0ea"/>
   <path d="M927.8 507.4V824.2" stroke="#5aa0ee"/>
   <path d="M927.8 824.2H611" stroke="#80b8f0"/>
   <path d="M611 824.2V507.4" stroke="#a8ccf0"/>
   <path d="M721.2 584H836.2" stroke="#3a84e8"/>
   <path d="M836.2 584V698.5" stroke="#5aa0ee"/>
   <path d="M836.2 698.5H721.2" stroke="#c8dcf0"/>
   <path d="M721.2 698.5V584" stroke="#e8f0f8"/>
  </g>
  <g fill="#2a2a2a"><circle cx="611" cy="507.4" r="3"/><circle cx="927.8" cy="507.4" r="3"/><circle cx="927.8" cy="824.2" r="3"/><circle cx="611" cy="824.2" r="3"/></g>
  <g fill="#f0a030"><rect x="718.7" y="581.5" width="5" height="5"/><rect x="833.7" y="581.5" width="5" height="5"/><rect x="833.7" y="696" width="5" height="5"/><rect x="718.7" y="696" width="5" height="5"/></g>
  <path d="M778.7 612.5V551" stroke="#30d060" stroke-width="2"/><path d="M778.7 539.5l-3.5 12h7z" fill="#30d060"/>
  <rect x="775.7" y="638.4" width="6" height="6" fill="#3070e0"/>
  <path d="M807.3 641.4H868" stroke="#e04040" stroke-width="1.6"/><path d="M880.6 641.4l-12-3.8v7.6z" fill="#e04040"/>
  <path d="M816.4 580H834c4 0 6 3 6 7v17" fill="none" stroke="#2d64d0" stroke-width="1.5"/>
  <path d="M830 580L840 590" stroke="#2d64d0" stroke-width="1.3"/>
  <g font-family="Liberation Sans" font-size="11">
   <text x="962" y="514" fill="#35c060">Y</text>
   <text x="993" y="548" fill="#e04040">X</text>
   <text x="962" y="548" fill="#3070e0">Z</text>
  </g>
  <path d="M965.9 516.6V540.3" stroke="#35c060" stroke-width="1.4"/><path d="M965.9 540.3H988" stroke="#e04040" stroke-width="1.4"/>
 </g>
</svg>
<!-- viewport labels -->
<div class="lbl" style="left:51px;top:136px;width:32px"><span class="t fw" style="left:3px;top:1.5px;--w:26px">透視</span></div>
<div class="lbl" style="left:232px;top:135px;width:106px"><span class="t fw" style="left:3px;top:1.5px;--w:83px">デフォルトカメラ</span></div>
<svg style="left:0;top:0" width="1" height="1"><path d="M324 149v-6a3 3 0 0 1 6 0" fill="none" stroke="#b0b0b0" stroke-width="1.3"/><rect x="322" y="146" width="9" height="5" rx="1" fill="none" stroke="#b0b0b0" stroke-width="1.2"/><circle cx="333" cy="148" r="2" fill="#333"/></svg>
<div class="a" style="left:51px;top:170px;width:116px;height:47px;background:rgba(80,80,80,.6);border-radius:3px"></div>
<div class="t fw" style="left:105px;top:174px;font-size:14.5px;color:#dcdcdc;--w:59px">選択 合計</div>
<div class="t fw" style="left:53px;top:198px;font-size:14.5px;color:#dcdcdc;--w:40px">ポイント</div>
<div class="t" style="left:105px;top:198px;font-size:14.5px;color:#dcdcdc">4</div>
<div class="t" style="left:137px;top:198px;font-size:14.5px;color:#dcdcdc">8</div>
<div class="lbl" style="left:51px;top:234px;width:93px"><span class="t fw" style="left:3px;top:1.5px;--w:65px">長方形選択</span></div>
<div class="a" style="left:128px;top:238px;width:10px;height:10px;border:1px dotted #8a6a40"></div>
<div class="lbl" style="left:51px;top:444px;width:106px"><span class="t fw" style="left:2px;top:1.5px;--w:99px">ビューの変換: シーン</span></div>
<div class="lbl" style="left:381px;top:444px;width:141px"><span class="t fw" style="left:2px;top:1.5px;--w:136px">グリッド間隔 : 50000 cm</span></div>
<div class="lbl" style="left:535px;top:136px;width:31px"><span class="t fw" style="left:3px;top:1.5px;--w:26px">上面</span></div>
<div class="lbl" style="left:879px;top:444px;width:125px"><span class="t fw" style="left:2px;top:1.5px;--w:114px">グリッド間隔 : 50 cm</span></div>
<div class="lbl" style="left:53px;top:503px;width:30px"><span class="t fw" style="left:3px;top:1.5px;--w:26px">右面</span></div>
<div class="lbl" style="left:396px;top:811px;width:125px"><span class="t fw" style="left:2px;top:1.5px;--w:114px">グリッド間隔 : 50 cm</span></div>
<div class="lbl" style="left:534px;top:503px;width:32px"><span class="t fw" style="left:3px;top:1.5px;--w:26px">前面</span></div>
<div class="lbl" style="left:878px;top:811px;width:126px"><span class="t fw" style="left:2px;top:1.5px;--w:114px">グリッド間隔 : 50 cm</span></div>
<!-- TIMELINE -->
<svg style="left:0;top:0" width="1" height="1"><path d="M52.0 837.5h1.2v1.2h-1.2zM52.0 841.5h1.2v1.2h-1.2zM55.8 837.5h1.2v1.2h-1.2zM55.8 841.5h1.2v1.2h-1.2zM59.6 837.5h1.2v1.2h-1.2zM59.6 841.5h1.2v1.2h-1.2zM63.4 837.5h1.2v1.2h-1.2zM63.4 841.5h1.2v1.2h-1.2zM67.2 837.5h1.2v1.2h-1.2zM67.2 841.5h1.2v1.2h-1.2zM71.0 837.5h1.2v1.2h-1.2zM71.0 841.5h1.2v1.2h-1.2zM74.8 837.5h1.2v1.2h-1.2zM74.8 841.5h1.2v1.2h-1.2zM78.6 837.5h1.2v1.2h-1.2zM78.6 841.5h1.2v1.2h-1.2zM82.4 837.5h1.2v1.2h-1.2zM82.4 841.5h1.2v1.2h-1.2zM86.2 837.5h1.2v1.2h-1.2zM86.2 841.5h1.2v1.2h-1.2zM90.0 837.5h1.2v1.2h-1.2zM90.0 841.5h1.2v1.2h-1.2zM93.8 837.5h1.2v1.2h-1.2zM93.8 841.5h1.2v1.2h-1.2zM97.6 837.5h1.2v1.2h-1.2zM97.6 841.5h1.2v1.2h-1.2zM101.4 837.5h1.2v1.2h-1.2zM101.4 841.5h1.2v1.2h-1.2zM105.2 837.5h1.2v1.2h-1.2zM105.2 841.5h1.2v1.2h-1.2zM109.0 837.5h1.2v1.2h-1.2zM109.0 841.5h1.2v1.2h-1.2zM112.8 837.5h1.2v1.2h-1.2zM112.8 841.5h1.2v1.2h-1.2zM116.6 837.5h1.2v1.2h-1.2zM116.6 841.5h1.2v1.2h-1.2zM120.4 837.5h1.2v1.2h-1.2zM120.4 841.5h1.2v1.2h-1.2zM124.2 837.5h1.2v1.2h-1.2zM124.2 841.5h1.2v1.2h-1.2zM128.0 837.5h1.2v1.2h-1.2zM128.0 841.5h1.2v1.2h-1.2zM131.8 837.5h1.2v1.2h-1.2zM131.8 841.5h1.2v1.2h-1.2zM135.6 837.5h1.2v1.2h-1.2zM135.6 841.5h1.2v1.2h-1.2zM139.4 837.5h1.2v1.2h-1.2zM139.4 841.5h1.2v1.2h-1.2zM143.2 837.5h1.2v1.2h-1.2zM143.2 841.5h1.2v1.2h-1.2zM147.0 837.5h1.2v1.2h-1.2zM147.0 841.5h1.2v1.2h-1.2zM150.8 837.5h1.2v1.2h-1.2zM150.8 841.5h1.2v1.2h-1.2zM154.6 837.5h1.2v1.2h-1.2zM154.6 841.5h1.2v1.2h-1.2zM158.4 837.5h1.2v1.2h-1.2zM158.4 841.5h1.2v1.2h-1.2zM162.2 837.5h1.2v1.2h-1.2zM162.2 841.5h1.2v1.2h-1.2zM166.0 837.5h1.2v1.2h-1.2zM166.0 841.5h1.2v1.2h-1.2zM169.8 837.5h1.2v1.2h-1.2zM169.8 841.5h1.2v1.2h-1.2zM173.6 837.5h1.2v1.2h-1.2zM173.6 841.5h1.2v1.2h-1.2zM177.4 837.5h1.2v1.2h-1.2zM177.4 841.5h1.2v1.2h-1.2zM181.2 837.5h1.2v1.2h-1.2zM181.2 841.5h1.2v1.2h-1.2zM185.0 837.5h1.2v1.2h-1.2zM185.0 841.5h1.2v1.2h-1.2zM188.8 837.5h1.2v1.2h-1.2zM188.8 841.5h1.2v1.2h-1.2zM192.6 837.5h1.2v1.2h-1.2zM192.6 841.5h1.2v1.2h-1.2zM196.4 837.5h1.2v1.2h-1.2zM196.4 841.5h1.2v1.2h-1.2zM200.2 837.5h1.2v1.2h-1.2zM200.2 841.5h1.2v1.2h-1.2zM204.0 837.5h1.2v1.2h-1.2zM204.0 841.5h1.2v1.2h-1.2zM207.8 837.5h1.2v1.2h-1.2zM207.8 841.5h1.2v1.2h-1.2zM211.6 837.5h1.2v1.2h-1.2zM211.6 841.5h1.2v1.2h-1.2zM215.4 837.5h1.2v1.2h-1.2zM215.4 841.5h1.2v1.2h-1.2zM219.2 837.5h1.2v1.2h-1.2zM219.2 841.5h1.2v1.2h-1.2zM223.0 837.5h1.2v1.2h-1.2zM223.0 841.5h1.2v1.2h-1.2zM226.8 837.5h1.2v1.2h-1.2zM226.8 841.5h1.2v1.2h-1.2zM230.6 837.5h1.2v1.2h-1.2zM230.6 841.5h1.2v1.2h-1.2zM234.4 837.5h1.2v1.2h-1.2zM234.4 841.5h1.2v1.2h-1.2zM238.2 837.5h1.2v1.2h-1.2zM238.2 841.5h1.2v1.2h-1.2zM242.0 837.5h1.2v1.2h-1.2zM242.0 841.5h1.2v1.2h-1.2zM245.8 837.5h1.2v1.2h-1.2zM245.8 841.5h1.2v1.2h-1.2zM249.6 837.5h1.2v1.2h-1.2zM249.6 841.5h1.2v1.2h-1.2zM253.4 837.5h1.2v1.2h-1.2zM253.4 841.5h1.2v1.2h-1.2zM257.2 837.5h1.2v1.2h-1.2zM257.2 841.5h1.2v1.2h-1.2zM261.0 837.5h1.2v1.2h-1.2zM261.0 841.5h1.2v1.2h-1.2zM264.8 837.5h1.2v1.2h-1.2zM264.8 841.5h1.2v1.2h-1.2zM268.6 837.5h1.2v1.2h-1.2zM268.6 841.5h1.2v1.2h-1.2zM272.4 837.5h1.2v1.2h-1.2zM272.4 841.5h1.2v1.2h-1.2zM276.2 837.5h1.2v1.2h-1.2zM276.2 841.5h1.2v1.2h-1.2zM280.0 837.5h1.2v1.2h-1.2zM280.0 841.5h1.2v1.2h-1.2zM283.8 837.5h1.2v1.2h-1.2zM283.8 841.5h1.2v1.2h-1.2zM287.6 837.5h1.2v1.2h-1.2zM287.6 841.5h1.2v1.2h-1.2zM291.4 837.5h1.2v1.2h-1.2zM291.4 841.5h1.2v1.2h-1.2zM295.2 837.5h1.2v1.2h-1.2zM295.2 841.5h1.2v1.2h-1.2zM299.0 837.5h1.2v1.2h-1.2zM299.0 841.5h1.2v1.2h-1.2zM302.8 837.5h1.2v1.2h-1.2zM302.8 841.5h1.2v1.2h-1.2zM306.6 837.5h1.2v1.2h-1.2zM306.6 841.5h1.2v1.2h-1.2zM310.4 837.5h1.2v1.2h-1.2zM310.4 841.5h1.2v1.2h-1.2zM314.2 837.5h1.2v1.2h-1.2zM314.2 841.5h1.2v1.2h-1.2zM318.0 837.5h1.2v1.2h-1.2zM318.0 841.5h1.2v1.2h-1.2zM321.8 837.5h1.2v1.2h-1.2zM321.8 841.5h1.2v1.2h-1.2zM325.6 837.5h1.2v1.2h-1.2zM325.6 841.5h1.2v1.2h-1.2zM329.4 837.5h1.2v1.2h-1.2zM329.4 841.5h1.2v1.2h-1.2zM333.2 837.5h1.2v1.2h-1.2zM333.2 841.5h1.2v1.2h-1.2zM337.0 837.5h1.2v1.2h-1.2zM337.0 841.5h1.2v1.2h-1.2zM340.8 837.5h1.2v1.2h-1.2zM340.8 841.5h1.2v1.2h-1.2zM344.6 837.5h1.2v1.2h-1.2zM344.6 841.5h1.2v1.2h-1.2zM348.4 837.5h1.2v1.2h-1.2zM348.4 841.5h1.2v1.2h-1.2zM352.2 837.5h1.2v1.2h-1.2zM352.2 841.5h1.2v1.2h-1.2zM356.0 837.5h1.2v1.2h-1.2zM356.0 841.5h1.2v1.2h-1.2zM359.8 837.5h1.2v1.2h-1.2zM359.8 841.5h1.2v1.2h-1.2zM363.6 837.5h1.2v1.2h-1.2zM363.6 841.5h1.2v1.2h-1.2zM367.4 837.5h1.2v1.2h-1.2zM367.4 841.5h1.2v1.2h-1.2zM371.2 837.5h1.2v1.2h-1.2zM371.2 841.5h1.2v1.2h-1.2zM375.0 837.5h1.2v1.2h-1.2zM375.0 841.5h1.2v1.2h-1.2zM378.8 837.5h1.2v1.2h-1.2zM378.8 841.5h1.2v1.2h-1.2zM382.6 837.5h1.2v1.2h-1.2zM382.6 841.5h1.2v1.2h-1.2zM386.4 837.5h1.2v1.2h-1.2zM386.4 841.5h1.2v1.2h-1.2zM390.2 837.5h1.2v1.2h-1.2zM390.2 841.5h1.2v1.2h-1.2zM394.0 837.5h1.2v1.2h-1.2zM394.0 841.5h1.2v1.2h-1.2zM397.8 837.5h1.2v1.2h-1.2zM397.8 841.5h1.2v1.2h-1.2zM401.6 837.5h1.2v1.2h-1.2zM401.6 841.5h1.2v1.2h-1.2zM405.4 837.5h1.2v1.2h-1.2zM405.4 841.5h1.2v1.2h-1.2zM409.2 837.5h1.2v1.2h-1.2zM409.2 841.5h1.2v1.2h-1.2zM413.0 837.5h1.2v1.2h-1.2zM413.0 841.5h1.2v1.2h-1.2zM416.8 837.5h1.2v1.2h-1.2zM416.8 841.5h1.2v1.2h-1.2zM420.6 837.5h1.2v1.2h-1.2zM420.6 841.5h1.2v1.2h-1.2zM424.4 837.5h1.2v1.2h-1.2zM424.4 841.5h1.2v1.2h-1.2zM428.2 837.5h1.2v1.2h-1.2zM428.2 841.5h1.2v1.2h-1.2zM432.0 837.5h1.2v1.2h-1.2zM432.0 841.5h1.2v1.2h-1.2zM435.8 837.5h1.2v1.2h-1.2zM435.8 841.5h1.2v1.2h-1.2zM439.6 837.5h1.2v1.2h-1.2zM439.6 841.5h1.2v1.2h-1.2zM443.4 837.5h1.2v1.2h-1.2zM443.4 841.5h1.2v1.2h-1.2zM447.2 837.5h1.2v1.2h-1.2zM447.2 841.5h1.2v1.2h-1.2zM451.0 837.5h1.2v1.2h-1.2zM451.0 841.5h1.2v1.2h-1.2zM454.8 837.5h1.2v1.2h-1.2zM454.8 841.5h1.2v1.2h-1.2zM458.6 837.5h1.2v1.2h-1.2zM458.6 841.5h1.2v1.2h-1.2zM462.4 837.5h1.2v1.2h-1.2zM462.4 841.5h1.2v1.2h-1.2zM466.2 837.5h1.2v1.2h-1.2zM466.2 841.5h1.2v1.2h-1.2zM470.0 837.5h1.2v1.2h-1.2zM470.0 841.5h1.2v1.2h-1.2zM473.8 837.5h1.2v1.2h-1.2zM473.8 841.5h1.2v1.2h-1.2zM477.6 837.5h1.2v1.2h-1.2zM477.6 841.5h1.2v1.2h-1.2zM481.4 837.5h1.2v1.2h-1.2zM481.4 841.5h1.2v1.2h-1.2zM485.2 837.5h1.2v1.2h-1.2zM485.2 841.5h1.2v1.2h-1.2zM489.0 837.5h1.2v1.2h-1.2zM489.0 841.5h1.2v1.2h-1.2zM492.8 837.5h1.2v1.2h-1.2zM492.8 841.5h1.2v1.2h-1.2zM496.6 837.5h1.2v1.2h-1.2zM496.6 841.5h1.2v1.2h-1.2zM500.4 837.5h1.2v1.2h-1.2zM500.4 841.5h1.2v1.2h-1.2zM504.2 837.5h1.2v1.2h-1.2zM504.2 841.5h1.2v1.2h-1.2zM508.0 837.5h1.2v1.2h-1.2zM508.0 841.5h1.2v1.2h-1.2zM511.8 837.5h1.2v1.2h-1.2zM511.8 841.5h1.2v1.2h-1.2zM515.6 837.5h1.2v1.2h-1.2zM515.6 841.5h1.2v1.2h-1.2zM519.4 837.5h1.2v1.2h-1.2zM519.4 841.5h1.2v1.2h-1.2zM523.2 837.5h1.2v1.2h-1.2zM523.2 841.5h1.2v1.2h-1.2zM527.0 837.5h1.2v1.2h-1.2zM527.0 841.5h1.2v1.2h-1.2zM530.8 837.5h1.2v1.2h-1.2zM530.8 841.5h1.2v1.2h-1.2zM534.6 837.5h1.2v1.2h-1.2zM534.6 841.5h1.2v1.2h-1.2zM538.4 837.5h1.2v1.2h-1.2zM538.4 841.5h1.2v1.2h-1.2zM542.2 837.5h1.2v1.2h-1.2zM542.2 841.5h1.2v1.2h-1.2zM546.0 837.5h1.2v1.2h-1.2zM546.0 841.5h1.2v1.2h-1.2zM549.8 837.5h1.2v1.2h-1.2zM549.8 841.5h1.2v1.2h-1.2zM553.6 837.5h1.2v1.2h-1.2zM553.6 841.5h1.2v1.2h-1.2zM557.4 837.5h1.2v1.2h-1.2zM557.4 841.5h1.2v1.2h-1.2zM561.2 837.5h1.2v1.2h-1.2zM561.2 841.5h1.2v1.2h-1.2zM565.0 837.5h1.2v1.2h-1.2zM565.0 841.5h1.2v1.2h-1.2zM568.8 837.5h1.2v1.2h-1.2zM568.8 841.5h1.2v1.2h-1.2zM572.6 837.5h1.2v1.2h-1.2zM572.6 841.5h1.2v1.2h-1.2zM576.4 837.5h1.2v1.2h-1.2zM576.4 841.5h1.2v1.2h-1.2zM580.2 837.5h1.2v1.2h-1.2zM580.2 841.5h1.2v1.2h-1.2zM584.0 837.5h1.2v1.2h-1.2zM584.0 841.5h1.2v1.2h-1.2zM587.8 837.5h1.2v1.2h-1.2zM587.8 841.5h1.2v1.2h-1.2zM591.6 837.5h1.2v1.2h-1.2zM591.6 841.5h1.2v1.2h-1.2zM595.4 837.5h1.2v1.2h-1.2zM595.4 841.5h1.2v1.2h-1.2zM599.2 837.5h1.2v1.2h-1.2zM599.2 841.5h1.2v1.2h-1.2zM603.0 837.5h1.2v1.2h-1.2zM603.0 841.5h1.2v1.2h-1.2zM606.8 837.5h1.2v1.2h-1.2zM606.8 841.5h1.2v1.2h-1.2zM610.6 837.5h1.2v1.2h-1.2zM610.6 841.5h1.2v1.2h-1.2zM614.4 837.5h1.2v1.2h-1.2zM614.4 841.5h1.2v1.2h-1.2zM618.2 837.5h1.2v1.2h-1.2zM618.2 841.5h1.2v1.2h-1.2zM622.0 837.5h1.2v1.2h-1.2zM622.0 841.5h1.2v1.2h-1.2zM625.8 837.5h1.2v1.2h-1.2zM625.8 841.5h1.2v1.2h-1.2zM629.6 837.5h1.2v1.2h-1.2zM629.6 841.5h1.2v1.2h-1.2zM633.4 837.5h1.2v1.2h-1.2zM633.4 841.5h1.2v1.2h-1.2zM637.2 837.5h1.2v1.2h-1.2zM637.2 841.5h1.2v1.2h-1.2zM641.0 837.5h1.2v1.2h-1.2zM641.0 841.5h1.2v1.2h-1.2zM644.8 837.5h1.2v1.2h-1.2zM644.8 841.5h1.2v1.2h-1.2zM648.6 837.5h1.2v1.2h-1.2zM648.6 841.5h1.2v1.2h-1.2zM652.4 837.5h1.2v1.2h-1.2zM652.4 841.5h1.2v1.2h-1.2zM656.2 837.5h1.2v1.2h-1.2zM656.2 841.5h1.2v1.2h-1.2zM660.0 837.5h1.2v1.2h-1.2zM660.0 841.5h1.2v1.2h-1.2zM663.8 837.5h1.2v1.2h-1.2zM663.8 841.5h1.2v1.2h-1.2zM667.6 837.5h1.2v1.2h-1.2zM667.6 841.5h1.2v1.2h-1.2zM671.4 837.5h1.2v1.2h-1.2zM671.4 841.5h1.2v1.2h-1.2zM675.2 837.5h1.2v1.2h-1.2zM675.2 841.5h1.2v1.2h-1.2zM679.0 837.5h1.2v1.2h-1.2zM679.0 841.5h1.2v1.2h-1.2zM682.8 837.5h1.2v1.2h-1.2zM682.8 841.5h1.2v1.2h-1.2zM686.6 837.5h1.2v1.2h-1.2zM686.6 841.5h1.2v1.2h-1.2zM690.4 837.5h1.2v1.2h-1.2zM690.4 841.5h1.2v1.2h-1.2zM694.2 837.5h1.2v1.2h-1.2zM694.2 841.5h1.2v1.2h-1.2zM698.0 837.5h1.2v1.2h-1.2zM698.0 841.5h1.2v1.2h-1.2zM701.8 837.5h1.2v1.2h-1.2zM701.8 841.5h1.2v1.2h-1.2zM705.6 837.5h1.2v1.2h-1.2zM705.6 841.5h1.2v1.2h-1.2zM709.4 837.5h1.2v1.2h-1.2zM709.4 841.5h1.2v1.2h-1.2zM713.2 837.5h1.2v1.2h-1.2zM713.2 841.5h1.2v1.2h-1.2zM717.0 837.5h1.2v1.2h-1.2zM717.0 841.5h1.2v1.2h-1.2zM720.8 837.5h1.2v1.2h-1.2zM720.8 841.5h1.2v1.2h-1.2zM724.6 837.5h1.2v1.2h-1.2zM724.6 841.5h1.2v1.2h-1.2zM728.4 837.5h1.2v1.2h-1.2zM728.4 841.5h1.2v1.2h-1.2zM732.2 837.5h1.2v1.2h-1.2zM732.2 841.5h1.2v1.2h-1.2zM736.0 837.5h1.2v1.2h-1.2zM736.0 841.5h1.2v1.2h-1.2zM739.8 837.5h1.2v1.2h-1.2zM739.8 841.5h1.2v1.2h-1.2zM743.6 837.5h1.2v1.2h-1.2zM743.6 841.5h1.2v1.2h-1.2zM747.4 837.5h1.2v1.2h-1.2zM747.4 841.5h1.2v1.2h-1.2zM751.2 837.5h1.2v1.2h-1.2zM751.2 841.5h1.2v1.2h-1.2zM755.0 837.5h1.2v1.2h-1.2zM755.0 841.5h1.2v1.2h-1.2zM758.8 837.5h1.2v1.2h-1.2zM758.8 841.5h1.2v1.2h-1.2zM762.6 837.5h1.2v1.2h-1.2zM762.6 841.5h1.2v1.2h-1.2zM766.4 837.5h1.2v1.2h-1.2zM766.4 841.5h1.2v1.2h-1.2zM770.2 837.5h1.2v1.2h-1.2zM770.2 841.5h1.2v1.2h-1.2zM774.0 837.5h1.2v1.2h-1.2zM774.0 841.5h1.2v1.2h-1.2zM777.8 837.5h1.2v1.2h-1.2zM777.8 841.5h1.2v1.2h-1.2zM781.6 837.5h1.2v1.2h-1.2zM781.6 841.5h1.2v1.2h-1.2zM785.4 837.5h1.2v1.2h-1.2zM785.4 841.5h1.2v1.2h-1.2zM789.2 837.5h1.2v1.2h-1.2zM789.2 841.5h1.2v1.2h-1.2zM793.0 837.5h1.2v1.2h-1.2zM793.0 841.5h1.2v1.2h-1.2zM796.8 837.5h1.2v1.2h-1.2zM796.8 841.5h1.2v1.2h-1.2zM800.6 837.5h1.2v1.2h-1.2zM800.6 841.5h1.2v1.2h-1.2zM804.4 837.5h1.2v1.2h-1.2zM804.4 841.5h1.2v1.2h-1.2zM808.2 837.5h1.2v1.2h-1.2zM808.2 841.5h1.2v1.2h-1.2zM812.0 837.5h1.2v1.2h-1.2zM812.0 841.5h1.2v1.2h-1.2zM815.8 837.5h1.2v1.2h-1.2zM815.8 841.5h1.2v1.2h-1.2zM819.6 837.5h1.2v1.2h-1.2zM819.6 841.5h1.2v1.2h-1.2zM823.4 837.5h1.2v1.2h-1.2zM823.4 841.5h1.2v1.2h-1.2zM827.2 837.5h1.2v1.2h-1.2zM827.2 841.5h1.2v1.2h-1.2zM831.0 837.5h1.2v1.2h-1.2zM831.0 841.5h1.2v1.2h-1.2zM834.8 837.5h1.2v1.2h-1.2zM834.8 841.5h1.2v1.2h-1.2zM838.6 837.5h1.2v1.2h-1.2zM838.6 841.5h1.2v1.2h-1.2zM842.4 837.5h1.2v1.2h-1.2zM842.4 841.5h1.2v1.2h-1.2zM846.2 837.5h1.2v1.2h-1.2zM846.2 841.5h1.2v1.2h-1.2zM850.0 837.5h1.2v1.2h-1.2zM850.0 841.5h1.2v1.2h-1.2zM853.8 837.5h1.2v1.2h-1.2zM853.8 841.5h1.2v1.2h-1.2zM857.6 837.5h1.2v1.2h-1.2zM857.6 841.5h1.2v1.2h-1.2zM861.4 837.5h1.2v1.2h-1.2zM861.4 841.5h1.2v1.2h-1.2zM865.2 837.5h1.2v1.2h-1.2zM865.2 841.5h1.2v1.2h-1.2zM869.0 837.5h1.2v1.2h-1.2zM869.0 841.5h1.2v1.2h-1.2zM872.8 837.5h1.2v1.2h-1.2zM872.8 841.5h1.2v1.2h-1.2zM876.6 837.5h1.2v1.2h-1.2zM876.6 841.5h1.2v1.2h-1.2zM880.4 837.5h1.2v1.2h-1.2zM880.4 841.5h1.2v1.2h-1.2zM884.2 837.5h1.2v1.2h-1.2zM884.2 841.5h1.2v1.2h-1.2zM888.0 837.5h1.2v1.2h-1.2zM888.0 841.5h1.2v1.2h-1.2zM891.8 837.5h1.2v1.2h-1.2zM891.8 841.5h1.2v1.2h-1.2zM895.6 837.5h1.2v1.2h-1.2zM895.6 841.5h1.2v1.2h-1.2zM899.4 837.5h1.2v1.2h-1.2zM899.4 841.5h1.2v1.2h-1.2zM903.2 837.5h1.2v1.2h-1.2zM903.2 841.5h1.2v1.2h-1.2zM907.0 837.5h1.2v1.2h-1.2zM907.0 841.5h1.2v1.2h-1.2zM910.8 837.5h1.2v1.2h-1.2zM910.8 841.5h1.2v1.2h-1.2zM914.6 837.5h1.2v1.2h-1.2zM914.6 841.5h1.2v1.2h-1.2zM918.4 837.5h1.2v1.2h-1.2zM918.4 841.5h1.2v1.2h-1.2zM922.2 837.5h1.2v1.2h-1.2zM922.2 841.5h1.2v1.2h-1.2zM926.0 837.5h1.2v1.2h-1.2zM926.0 841.5h1.2v1.2h-1.2zM929.8 837.5h1.2v1.2h-1.2zM929.8 841.5h1.2v1.2h-1.2zM933.6 837.5h1.2v1.2h-1.2zM933.6 841.5h1.2v1.2h-1.2zM937.4 837.5h1.2v1.2h-1.2zM937.4 841.5h1.2v1.2h-1.2zM941.2 837.5h1.2v1.2h-1.2zM941.2 841.5h1.2v1.2h-1.2zM945.0 837.5h1.2v1.2h-1.2zM945.0 841.5h1.2v1.2h-1.2zM948.8 837.5h1.2v1.2h-1.2zM948.8 841.5h1.2v1.2h-1.2zM952.6 837.5h1.2v1.2h-1.2zM952.6 841.5h1.2v1.2h-1.2zM956.4 837.5h1.2v1.2h-1.2zM956.4 841.5h1.2v1.2h-1.2zM960.2 837.5h1.2v1.2h-1.2zM960.2 841.5h1.2v1.2h-1.2zM964.0 837.5h1.2v1.2h-1.2zM964.0 841.5h1.2v1.2h-1.2zM967.8 837.5h1.2v1.2h-1.2zM967.8 841.5h1.2v1.2h-1.2zM971.6 837.5h1.2v1.2h-1.2zM971.6 841.5h1.2v1.2h-1.2zM975.4 837.5h1.2v1.2h-1.2zM975.4 841.5h1.2v1.2h-1.2zM979.2 837.5h1.2v1.2h-1.2zM979.2 841.5h1.2v1.2h-1.2zM983.0 837.5h1.2v1.2h-1.2zM983.0 841.5h1.2v1.2h-1.2zM986.8 837.5h1.2v1.2h-1.2zM986.8 841.5h1.2v1.2h-1.2zM990.6 837.5h1.2v1.2h-1.2zM990.6 841.5h1.2v1.2h-1.2zM994.4 837.5h1.2v1.2h-1.2zM994.4 841.5h1.2v1.2h-1.2zM998.2 837.5h1.2v1.2h-1.2zM998.2 841.5h1.2v1.2h-1.2zM1002.0 837.5h1.2v1.2h-1.2zM1002.0 841.5h1.2v1.2h-1.2zM1005.8 837.5h1.2v1.2h-1.2zM1005.8 841.5h1.2v1.2h-1.2zM47.5 852.0h1.2v1.2h-1.2zM51.5 852.0h1.2v1.2h-1.2zM47.5 855.8h1.2v1.2h-1.2zM51.5 855.8h1.2v1.2h-1.2zM47.5 859.6h1.2v1.2h-1.2zM51.5 859.6h1.2v1.2h-1.2zM47.5 863.4h1.2v1.2h-1.2zM51.5 863.4h1.2v1.2h-1.2zM47.5 867.2h1.2v1.2h-1.2zM51.5 867.2h1.2v1.2h-1.2zM47.5 871.0h1.2v1.2h-1.2zM51.5 871.0h1.2v1.2h-1.2zM47.5 874.8h1.2v1.2h-1.2zM51.5 874.8h1.2v1.2h-1.2zM47.5 887.0h1.2v1.2h-1.2zM51.5 887.0h1.2v1.2h-1.2zM47.5 890.8h1.2v1.2h-1.2zM51.5 890.8h1.2v1.2h-1.2zM47.5 894.6h1.2v1.2h-1.2zM51.5 894.6h1.2v1.2h-1.2zM47.5 898.4h1.2v1.2h-1.2zM51.5 898.4h1.2v1.2h-1.2zM47.5 902.2h1.2v1.2h-1.2zM51.5 902.2h1.2v1.2h-1.2zM47.5 906.0h1.2v1.2h-1.2zM51.5 906.0h1.2v1.2h-1.2zM47.5 909.8h1.2v1.2h-1.2zM51.5 909.8h1.2v1.2h-1.2zM47.5 913.6h1.2v1.2h-1.2zM51.5 913.6h1.2v1.2h-1.2zM47.5 917.4h1.2v1.2h-1.2zM51.5 917.4h1.2v1.2h-1.2zM47.5 921.2h1.2v1.2h-1.2zM51.5 921.2h1.2v1.2h-1.2zM47.5 925.0h1.2v1.2h-1.2zM51.5 925.0h1.2v1.2h-1.2zM47.5 928.8h1.2v1.2h-1.2zM51.5 928.8h1.2v1.2h-1.2zM47.5 932.6h1.2v1.2h-1.2zM51.5 932.6h1.2v1.2h-1.2z" fill="#4c4c4c"/></svg>
<div class="grp" style="left:57px;top:848px;width:33px;height:32px;background:#5a5c9e"></div>
<div class="grp" style="left:138px;top:848px;width:244px;height:32px"><div class="sep" style="left:34px"></div><div class="sep" style="left:69px"></div><div class="sep" style="left:104px"></div><div class="sep" style="left:139px"></div><div class="sep" style="left:174px"></div><div class="sep" style="left:209px"></div></div>
<div class="grp" style="left:396px;top:848px;width:104px;height:32px"><div class="act" style="left:0;width:68px"></div><div class="sep" style="left:34px;background:#4a4c80"></div></div>
<div class="a" style="left:513px;top:853px;width:94px;height:23px;background:#1d1d1d;border-radius:4px"></div>
<div class="t" style="left:549px;top:857px;font-size:14.5px;color:#e0e0e0">0 F</div>
<div class="grp" style="left:620px;top:848px;width:104px;height:32px"><div class="sep" style="left:34px"></div><div class="sep" style="left:69px"></div></div>
<div class="grp" style="left:750px;top:848px;width:174px;height:32px"><div class="act" style="left:139px;width:35px"></div><div class="sep" style="left:34px"></div><div class="sep" style="left:69px"></div><div class="sep" style="left:104px"></div></div>
<div class="grp" style="left:971px;top:848px;width:34px;height:32px;background:#5a5c9e"></div>
<svg style="left:0;top:0" width="1" height="1">
<path d="M73.5 853.5l9.5 10.5-9.5 10.5-9.5-10.5z" fill="none" stroke="#d0d0d0" stroke-width="2.2"/>
<g fill="none" stroke="#c4c4c4" stroke-width="1.7" stroke-linejoin="round">
 <path d="M148 857v14M163 857l-11 7 11 7z"/>
 <path d="M199 857l-10 7 10 7z"/>
 <path d="M231 857l-10 7 10 7zM233 857v14"/>
 <path d="M254 855v18l14-9z"/>
 <path d="M288 857v14M291 857l10 7-10 7z"/>
 <path d="M320 857l10 7-10 7z"/>
 <path d="M358 857l10 7-10 7zM371 857v14"/>
</g>
<path d="M180 864l4.5-4.5 4.5 4.5-4.5 4.5z" fill="#c4c4c4"/><path d="M333 864l4-4 4 4-4 4z" fill="#c4c4c4"/>
<g fill="none" stroke="#d0d0d0" stroke-width="1.8" stroke-linejoin="round">
 <path d="M404 866v-5h15M416 857.5l3.5 3.5-3.5 3.5M422 862v5h-15M410 870.5l-3.5-3.5 3.5-3.5"/>
 <path d="M481 859l-4 3h-4v6h4l4 3zM485 859c2 3 2 7 0 10M488.5 856.5c3.5 4.5 3.5 11 0 15"/>
</g>
<text x="447" y="862" font-family="Liberation Sans" font-size="10" fill="#d8d8d8" text-anchor="middle">A</text>
<path d="M438 867h2v5h-2zM442.5 867h2v5h-2zM447 867h2v5h-2zM451.5 867h8v5h-8z" fill="#d8d8d8"/>
<circle cx="637" cy="864" r="10.5" fill="none" stroke="#e06050" stroke-width="1.8"/><path d="M637 859l5 5-5 5-5-5z" fill="#e8e8e8"/>
<circle cx="672" cy="864" r="10.5" fill="none" stroke="#e06050" stroke-width="1.8"/>
<text x="672" y="869.5" font-family="Liberation Sans" font-size="14" fill="#e8e8e8" text-anchor="middle">A</text>
<circle cx="707" cy="864" r="10.5" fill="none" stroke="#c8c8c8" stroke-width="1.8"/>
<path d="M711.45 862.82 L713.47 862.71 L713.47 865.29 L711.45 865.18 L710.98 866.31 L712.49 867.67 L710.67 869.49 L709.31 867.98 L708.18 868.45 L708.29 870.47 L705.71 870.47 L705.82 868.45 L704.69 867.98 L703.33 869.49 L701.51 867.67 L703.02 866.31 L702.55 865.18 L700.53 865.29 L700.53 862.71 L702.55 862.82 L703.02 861.69 L701.51 860.33 L703.33 858.51 L704.69 860.02 L705.82 859.55 L705.71 857.53 L708.29 857.53 L708.18 859.55 L709.31 860.02 L710.67 858.51 L712.49 860.33 L710.98 861.69zM709.2 864a2.2 2.2 0 1 0 -4.4 0a2.2 2.2 0 1 0 4.4 0z" fill="#c8c8c8" fill-rule="evenodd"/>
<g fill="none" stroke="#c8c8c8" stroke-width="1.7">
 <path d="M767 853l3 3M767 853l-3 3M767 875l3-3M767 875l-3-3M756 864l3 3M756 864l3-3M778 864l-3 3M778 864l-3-3"/>
</g>
<path d="M767 859l5 5-5 5-5-5z" fill="#c8c8c8"/>
<path d="M793 869a10 10 0 0 1 14-13M811 859a10 10 0 0 1-14 13" fill="none" stroke="#c8c8c8" stroke-width="1.8"/>
<path d="M806 853l2 4-4 1z M798 875l-2-4 4-1z" fill="#c8c8c8"/>
<path d="M802 859l5 5-5 5-5-5z" fill="#c8c8c8"/>
<path d="M831 855h14v16h-6" fill="none" stroke="#c8c8c8" stroke-width="1.8"/><path d="M834 864l5 5-5 5-5-5z" fill="#c8c8c8"/>
<rect x="860" y="856" width="22" height="7" rx="3.5" fill="#c8c8c8"/><rect x="860" y="866" width="22" height="7" rx="3.5" fill="#c8c8c8"/>
<circle cx="866" cy="859.5" r="2.2" fill="#3a3a3a"/><circle cx="876" cy="869.5" r="2.2" fill="#3a3a3a"/>
<circle cx="901" cy="870" r="4" fill="#d0d0d0"/><path d="M903 858l7 8" stroke="#d0d0d0" stroke-width="3.5"/><path d="M897 855l17 19" stroke="#5a5c9e" stroke-width="2"/><path d="M896 856l17 19" stroke="#d0d0d0" stroke-width="1.6"/>
<g fill="none" stroke="#d0d0d0" stroke-width="1.8" stroke-linecap="round" stroke-linejoin="round"><path d="M979 855v18h18M980 872l14-14M987 858h7v7M976 858l3-3 3 3M994 870l3 3-3 3"/></g>
<path d="M424 879l5-5v5z M459 879l5-5v5z M649 879l5-5v5z" fill="#9a9a9a"/>
</svg>
<svg style="left:0;top:0" width="1" height="1">
<rect x="59" y="904" width="950" height="1" fill="#3c3c3c"/>
<g font-family="Liberation Sans" font-size="13.5" fill="#b4b4b4"><text x="82" y="898" fill="#7a8ad8">0</text><text x="125.6" y="898" text-anchor="middle">5</text><text x="176.6" y="898" text-anchor="middle">10</text><text x="227.6" y="898" text-anchor="middle">15</text><text x="278.6" y="898" text-anchor="middle">20</text><text x="329.6" y="898" text-anchor="middle">25</text><text x="380.6" y="898" text-anchor="middle">30</text><text x="431.6" y="898" text-anchor="middle">35</text><text x="482.6" y="898" text-anchor="middle">40</text><text x="533.6" y="898" text-anchor="middle">45</text><text x="584.6" y="898" text-anchor="middle">50</text><text x="635.6" y="898" text-anchor="middle">55</text><text x="686.6" y="898" text-anchor="middle">60</text><text x="737.6" y="898" text-anchor="middle">65</text><text x="788.6" y="898" text-anchor="middle">70</text><text x="839.6" y="898" text-anchor="middle">75</text><text x="890.6" y="898" text-anchor="middle">80</text><text x="941.6" y="898" text-anchor="middle">85</text><text x="992.6" y="898" text-anchor="middle">90</text></g>
<path d="M64.4 907v4M74.6 907v4M84.8 907v4M95.0 907v4M105.2 907v4M115.4 907v4M125.6 907v4M135.8 907v4M146.0 907v4M156.2 907v4M166.4 907v4M176.6 907v4M186.8 907v4M197.0 907v4M207.2 907v4M217.4 907v4M227.6 907v4M237.8 907v4M248.0 907v4M258.2 907v4M268.4 907v4M278.6 907v4M288.8 907v4M299.0 907v4M309.2 907v4M319.4 907v4M329.6 907v4M339.8 907v4M350.0 907v4M360.2 907v4M370.4 907v4M380.6 907v4M390.8 907v4M401.0 907v4M411.2 907v4M421.4 907v4M431.6 907v4M441.8 907v4M452.0 907v4M462.2 907v4M472.4 907v4M482.6 907v4M492.8 907v4M503.0 907v4M513.2 907v4M523.4 907v4M533.6 907v4M543.8 907v4M554.0 907v4M564.2 907v4M574.4 907v4M584.6 907v4M594.8 907v4M605.0 907v4M615.2 907v4M625.4 907v4M635.6 907v4M645.8 907v4M656.0 907v4M666.2 907v4M676.4 907v4M686.6 907v4M696.8 907v4M707.0 907v4M717.2 907v4M727.4 907v4M737.6 907v4M747.8 907v4M758.0 907v4M768.2 907v4M778.4 907v4M788.6 907v4M798.8 907v4M809.0 907v4M819.2 907v4M829.4 907v4M839.6 907v4M849.8 907v4M860.0 907v4M870.2 907v4M880.4 907v4M890.6 907v4M900.8 907v4M911.0 907v4M921.2 907v4M931.4 907v4M941.6 907v4M951.8 907v4M962.0 907v4M972.2 907v4M982.4 907v4M992.6 907v4" stroke="#b8b8b8" stroke-width="1.3"/>
<path d="M380.6 885v27M686.6 885v27M992.6 885v27" stroke="#c8c8c8" stroke-width="1.2"/>
<rect x="68" y="884" width="12" height="20" fill="#7276bc"/>
<path d="M74.6 903v9" stroke="#c8c8c8" stroke-width="1.2"/>
</svg>
<div class="a" style="left:58px;top:915px;width:92px;height:22px;background:#1b1b1b;border-radius:4px"></div>
<div class="t" style="left:92px;top:920px;font-size:14.5px;color:#e0e0e0">0 F</div>
<div class="a" style="left:160px;top:915px;width:750px;height:21px;background:#393939;border-radius:4px"></div>
<div class="a" style="left:166px;top:919px;width:6px;height:13px;border-left:1px solid #555;border-right:1px solid #555"></div><div class="a" style="left:168.5px;top:919px;width:1px;height:13px;background:#555"></div>
<div class="a" style="left:897px;top:919px;width:6px;height:13px;border-left:1px solid #555;border-right:1px solid #555"></div><div class="a" style="left:899.5px;top:919px;width:1px;height:13px;background:#555"></div>
<div class="t" style="left:179px;top:919px;font-size:14.5px;color:#e0e0e0">0 F</div>
<div class="t" style="left:861px;top:919px;font-size:14.5px;color:#e0e0e0">90 F</div>
<div class="a" style="left:917px;top:915px;width:93px;height:22px;background:#1b1b1b;border-radius:4px"></div>
<div class="t" style="left:949px;top:920px;font-size:14.5px;color:#e0e0e0">90 F</div>
<div class="a" style="left:0;top:939px;width:1443px;height:7px;background:#1c1c1c"></div>
<!-- RIGHT STRIP -->
<div class="a" style="left:1009px;top:102px;width:50px;height:837px;background:#2b2b2b"></div>
<div class="a" style="left:1009px;top:102px;width:4px;height:734px;background:#1f1f1f"></div>
<div class="a" style="left:1057px;top:66px;width:2px;height:873px;background:#1f1f1f"></div>
<div class="grp" style="left:1013px;top:102px;width:44px;height:44px;border-radius:3px"></div>
<div class="grp" style="left:1013px;top:159px;width:44px;height:134px;border-radius:3px"><div class="a" style="left:0;right:0;top:44px;height:1px;background:#303030"></div><div class="a" style="left:0;right:0;top:89px;height:1px;background:#303030"></div></div>
<div class="grp" style="left:1013px;top:307px;width:44px;height:89px;border-radius:3px"><div class="a" style="left:0;right:0;top:43px;height:1px;background:#303030"></div></div>
<div class="grp" style="left:1013px;top:402px;width:44px;height:88px;border-radius:3px"><div class="a" style="left:0;right:0;top:44px;height:1px;background:#303030"></div></div>
<div class="grp" style="left:1013px;top:497px;width:44px;height:44px;border-radius:3px"></div>
<div class="grp" style="left:1013px;top:554px;width:44px;height:180px;border-radius:3px"><div class="a" style="left:0;right:0;top:46px;height:1px;background:#303030"></div><div class="a" style="left:0;right:0;top:89px;height:1px;background:#303030"></div><div class="a" style="left:0;right:0;top:134px;height:1px;background:#303030"></div></div>
<div class="grp" style="left:1013px;top:759px;width:44px;height:44px;border-radius:3px;background:#353535"></div>
<svg style="left:0;top:0" width="1" height="1">
 <!-- 1 coord -->
 <g fill="none" stroke="#cdd8f4" stroke-width="2.6" stroke-linecap="round" stroke-linejoin="round"><path d="M1025.5 113v21h22M1020.5 118l5-5 5 5M1042.5 129l5 5-5 5"/></g>
 <circle cx="1041" cy="118" r="7.4" fill="#cdd8f4"/>
 <!-- square -->
 <rect x="1024" y="170.5" width="22" height="22" fill="none" stroke="#80ccf2" stroke-width="2.6"/>
 <!-- cube -->
 <path d="M1035 211l13 7.5v15l-13 7.5-13-7.5v-15z" fill="#80ccf2"/>
 <path d="M1022 218.5l13 7.5 13-7.5M1035 226v15" fill="none" stroke="#3a3a3a" stroke-width="1.6"/>
 <!-- T -->
 <g fill="none" stroke="#80ccf2" stroke-width="2.6"><path d="M1022 259h25M1035 259v25M1029 284h12M1023.3 258v6M1045.7 258v6"/></g>
 <!-- green circle w/ points -->
 <circle cx="1035" cy="328.5" r="7.5" fill="#5cd070"/>
 <path d="M1027 320a11.5 11.5 0 0 1 16 0M1027 337a11.5 11.5 0 0 0 16 0" fill="none" stroke="#e8e8e8" stroke-width="1.4" stroke-dasharray="2 2"/>
 <path d="M1024 322v13M1046 322v13" stroke="#e8e8e8" stroke-width="1.4"/>
 <g fill="#3a3a3a" stroke="#f0f0f0" stroke-width="1.5"><rect x="1032.5" y="314" width="5" height="5"/><rect x="1032.5" y="338" width="5" height="5"/><rect x="1021.5" y="320" width="5" height="5"/><rect x="1043.5" y="320" width="5" height="5"/><rect x="1021.5" y="332" width="5" height="5"/><rect x="1043.5" y="332" width="5" height="5"/></g>
 <!-- green cube -->
 <path d="M1034.9 358.8l12.3 6.7-12.3 6.4-12.5-6.4z" fill="#5cd070"/>
 <path d="M1020.7 368.7l12.3 6.3v14l-12.3-7.6z" fill="#5cd070"/><path d="M1049.3 368.7l-12.7 6.3v14l12.7-7.6z" fill="#5cd070"/>
 <!-- deformer -->
 <path d="M1022.8 416.3L1031.3 410L1039.8 412Q1046 418 1047.2 427V432L1036.6 438.5L1029.2 433Q1029 428 1027 426L1022.8 422.6z" fill="none" stroke="#9c9cf4" stroke-width="2" stroke-linejoin="round"/>
 <path d="M1028 418.4Q1035 423 1037.6 433" fill="none" stroke="#9c9cf4" stroke-width="1.6"/>
 <!-- coord cube -->
 <g fill="none" stroke="#9c9cf4" stroke-width="2.2" stroke-linecap="round" stroke-linejoin="round"><path d="M1023.5 456v27h25M1019.5 460l4-4 4 4M1044.5 479l4 4-4 4"/>
 <path d="M1041 454l6 3.3v7l-6 3.3-6-3.3v-7z M1035 457.3l6 3.3 6-3.3 M1041 460.6v7" stroke-width="1.4"/></g>
 <!-- pink -->
 <g fill="none" stroke="#eea6f2" stroke-width="2.3" stroke-linejoin="miter"><path d="M1023.4 511.7L1034.2 517.2V533.1L1023.4 526.7z"/><path d="M1035.8 504.8L1047.2 510.9V526.5L1035.8 520.4z"/><path d="M1029.2 522.5L1040.8 515.4" stroke-width="1.8"/></g>
 <!-- globe ST -->
 <g fill="none" stroke="#cdd8f4" stroke-width="2.2"><circle cx="1034.8" cy="576.2" r="14"/><ellipse cx="1034.8" cy="576.2" rx="6" ry="14"/><path d="M1021 576.2h28M1023 569h23.5M1023 583.5h23.5"/></g>
 <!-- clapper -->
 <rect x="1021.2" y="615.5" width="27" height="17" fill="none" stroke="#cdd8f4" stroke-width="3"/>
 <path d="M1019.7 608h30v6.5h-30z" fill="#cdd8f4"/><path d="M1026 608l3 6.5M1033 608l3 6.5M1040 608l3 6.5" stroke="#3a3a3a" stroke-width="2"/>
 <!-- camera -->
 <g fill="none" stroke="#cdd8f4" stroke-width="2.6" stroke-linejoin="round"><path d="M1022 663.5h15v12.3h-15z"/><path d="M1022.5 663.5v-7h13.5v7"/></g>
 <path d="M1040 669l9.7-6v13z" fill="#cdd8f4"/>
 <!-- light -->
 <g fill="none" stroke="#cdd8f4" stroke-width="2.2"><circle cx="1034.8" cy="710" r="6.5"/><path d="M1034.8 696v4M1020 710h4M1045.5 710h4M1024.5 699.5l2.5 2.5M1045 699.5l-2.5 2.5M1031 719.5h7.5M1031 723h7.5"/></g>
 <!-- ST badges -->
 <g fill="#0e0e0e"><rect x="1036.5" y="579" width="14" height="12" rx="2.5"/><rect x="1036.5" y="669" width="14" height="12" rx="2.5"/><rect x="1036.5" y="714.5" width="14" height="12" rx="2.5"/></g>
 <g font-family="Liberation Sans" font-size="9" font-weight="bold" fill="#f0f0f0" text-anchor="middle"><text x="1043.5" y="588.5">ST</text><text x="1043.5" y="678.5">ST</text><text x="1043.5" y="724">ST</text></g>
 <!-- edit dim -->
 <path d="M1035 768l10 5.8v11.6l-10 5.8-10-5.8v-11.6z" fill="none" stroke="#4e4e4e" stroke-width="2"/>
 <path d="M1031 785l2-5 8-8 3 3-8 8z" fill="#4e4e4e"/>
 <path d="M1051 202l5-5v5z M1051 247l5-5v5z M1051 292l5-5v5z M1051 349l5-5v5z M1051 395l5-5v5z M1051 445l5-5v5z M1051 489l5-5v5z M1051 540l5-5v5z M1051 599l5-5v5z M1051 642l5-5v5z M1051 687l5-5v5z M1051 732l5-5v5z M1051 802l5-5v5z" fill="#8e8e8e"/>
</svg>
<!-- OBJECT MANAGER -->
<div class="a" style="left:1059px;top:66px;width:384px;height:873px;background:#2b2b2b"></div>
<div class="a" style="left:1059px;top:66px;width:384px;height:29px;background:#1d1d1d"></div>
<div class="a" style="left:1059px;top:67px;width:89px;height:28px;background:#2b2b2b;border-radius:3px 3px 0 0"></div>
<div class="t fw" style="left:1074px;top:74px;color:#e4e4e4;--w:59px">オブジェクト</div>
<div class="t fw" style="left:1164px;top:74px;color:#a8a8a8;--w:30px">テイク</div>
<div class="t fw" style="left:1097px;top:101px;--w:39px">ファイル</div>
<div class="t fw" style="left:1155px;top:101px;--w:27px">編集</div>
<div class="t fw" style="left:1201px;top:101px;--w:26px">表示</div>
<div class="t fw" style="left:1245px;top:101px;--w:59px">オブジェクト</div>
<div class="a" style="left:1059px;top:124px;width:384px;height:1px;background:#1f1f1f"></div>
<div class="a" style="left:1059px;top:125px;width:165px;height:26px;background:#232323"></div>
<div class="a" style="left:1225px;top:125px;width:218px;height:26px;background:#282828"></div>
<div class="a" style="left:1224px;top:125px;width:1px;height:230px;background:#1f1f1f"></div>
<div class="t fw" style="left:1106px;top:131px;color:#f2b440;font-size:15.5px;--w:50px">長方形.1</div>
<svg style="left:0;top:0" width="1" height="1">
 <path d="M1067 104.5h18M1067 110.5h18M1067 116.5h18" stroke="#acacac" stroke-width="2.4"/>
 <path d="M1321 106l5 5-5 5" fill="none" stroke="#c0c0c0" stroke-width="1.6"/>
 <g fill="none" stroke="#b8b8b8" stroke-width="1.9" stroke-linecap="round" stroke-linejoin="round">
  <circle cx="1354" cy="108" r="6"/><path d="M1358.5 112.5l5.5 5.5"/>
  <path d="M1374 117v-8l7.5-6.5 7.5 6.5v8h-4.5v-6h-6v6z"/>
  <path d="M1397 104h18M1400 110h12M1403.5 116h5"/>
  <path d="M1430 103.5h-7.5v15h15v-7.5M1429 112l9-9M1432 103h6v6"/>
 </g>
 <path d="M1071 124v13.5h10" fill="none" stroke="#5a5a5a" stroke-width="1"/>
 <path d="M1090.8 131.7C1082 133 1082 136.5 1088 138.2S1099 142 1090.8 144.2" fill="none" stroke="#6cc8f0" stroke-width="1.5"/>
 <circle cx="1090.8" cy="131.7" r="1.9" fill="#f0f0f0"/><circle cx="1090.8" cy="144.2" r="1.9" fill="#f0f0f0"/>
 <rect x="1170" y="132" width="13" height="12" rx="2" fill="#707070"/><path d="M1173 141l7-6" stroke="#282828" stroke-width="1.8"/>
 <circle cx="1194" cy="132.5" r="3" fill="#777"/><circle cx="1194" cy="143" r="3" fill="#777"/>
 <path d="M1203 138l4.5 4.5 9-9.5" fill="none" stroke="#55d070" stroke-width="2.4"/>
</svg>

<!-- ATTRIBUTE MANAGER -->
<div class="a" style="left:1059px;top:355px;width:384px;height:3px;background:#1f1f1f"></div>
<div class="a" style="left:1059px;top:358px;width:384px;height:28px;background:#1d1d1d"></div>
<div class="a" style="left:1059px;top:358px;width:58px;height:28px;background:#2b2b2b;border-radius:3px 3px 0 0"></div>
<div class="t fw" style="left:1074px;top:365px;color:#e4e4e4;--w:27px">属性</div>
<div class="t fw" style="left:1098px;top:393px;--w:30px">モード</div>
<div class="t fw" style="left:1145px;top:393px;--w:27px">編集</div>
<div class="a" style="left:1059px;top:414px;width:384px;height:1px;background:#1f1f1f"></div>
<div class="t fw" style="left:1100px;top:426px;color:#c0c0c0;--w:114px">スプライン [長方形.1]</div>
<div class="a" style="left:1293px;top:421px;width:143px;height:23px;background:#3a3a3a;border-radius:11px 6px 6px 11px"></div>
<div class="a" style="left:1410px;top:421px;width:1px;height:23px;background:#2e2e2e"></div>
<div class="t fw" style="left:1302px;top:426px;color:#d8d8d8;--w:42px">カスタム</div>
<div class="a" style="left:1070px;top:451px;width:50px;height:24px;background:#3a3a3a;border-radius:4px"></div>
<div class="a" style="left:1125px;top:451px;width:50px;height:24px;background:#3a3a3a;border-radius:4px"></div>
<div class="a" style="left:1180px;top:451px;width:82px;height:24px;background:#5a5c9e;border-radius:4px"></div>
<div class="t fw" style="left:1082px;top:456px;color:#d0d0d0;--w:26px">基本</div>
<div class="t fw" style="left:1137px;top:456px;color:#d0d0d0;--w:26px">座標</div>
<div class="t fw" style="left:1191px;top:456px;color:#f0f0f0;--w:59px">オブジェクト</div>
<div class="t fw" style="left:1070px;top:488px;color:#f0f0f0;-webkit-text-stroke:0.6px #f0f0f0;--w:106px">オブジェクトの属性</div>
<div class="a" style="left:1424px;top:482px;width:6px;height:142px;background:#3c3c3c;border-radius:3px"></div>
<div class="t fw" style="left:1098px;top:515px;--w:30px">タイプ</div>
<div class="t fw" style="left:1098px;top:541px;--w:95px">スプラインを閉じる</div>
<div class="t fw" style="left:1098px;top:565px;--w:41px">補間法</div>
<div class="t fw" style="left:1098px;top:592px;color:#6a6a6a;--w:41px">分割数</div>
<div class="t fw" style="left:1098px;top:619px;--w:55px">分割角度</div>
<div class="a" style="left:1199px;top:511px;width:218px;height:23px;background:#3a3a3a;border-radius:4px"></div>
<div class="t fw" style="left:1208px;top:516px;color:#d8d8d8;--w:40px">ベジエ</div>
<div class="a" style="left:1198px;top:540px;width:16px;height:16px;background:#5a5c9e;border-radius:3px"></div>
<div class="a" style="left:1199px;top:561px;width:218px;height:23px;background:#3a3a3a;border-radius:4px"></div>
<div class="t fw" style="left:1208px;top:566px;color:#d8d8d8;--w:28px">最適</div>
<div class="a" style="left:1198px;top:588px;width:94px;height:22px;background:#262626;border-radius:4px"></div>
<div class="t" style="left:1241px;top:592px;color:#6a6a6a;font-size:15.5px">8</div>
<div class="a" style="left:1198px;top:615px;width:94px;height:22px;background:#1b1b1b;border-radius:4px"></div>
<div class="t" style="left:1236px;top:619px;color:#e8e8e8;font-size:15.5px">5 °</div>
<div class="a" style="left:1059px;top:647px;width:384px;height:2px;background:#1f1f1f"></div>
<!-- coordinates -->
<div class="a" style="left:1174px;top:653px;width:25px;height:24px;background:#303030;border-radius:50%"></div>
<div class="a" style="left:1207px;top:654px;width:137px;height:23px;background:#3a3a3a;border-radius:4px"></div>
<div class="t fw" style="left:1216px;top:658px;color:#d8d8d8;--w:95px">オブジェクト(相対)</div>
<div class="a" style="left:1349px;top:654px;width:88px;height:23px;background:#303030;border-radius:4px"></div>
<div class="t fw" style="left:1359px;top:658px;color:#5e5e5e;--w:32px">サイズ</div>
<div class="t" style="left:1067px;top:691px;color:#9a9a9a">X</div>
<div class="t" style="left:1067px;top:718px;color:#9a9a9a">Y</div>
<div class="t" style="left:1067px;top:746px;color:#9a9a9a">Z</div>
<div class="a" style="left:1084px;top:687px;width:113px;height:22px;background:#1b1b1b;border-radius:4px"></div>
<div class="a" style="left:1203px;top:687px;width:113px;height:22px;background:#1b1b1b;border-radius:4px"></div>
<div class="a" style="left:1323px;top:687px;width:113px;height:22px;background:#1b1b1b;border-radius:4px"></div>
<div class="a" style="left:1084px;top:714px;width:113px;height:23px;background:#1b1b1b;border-radius:4px"></div>
<div class="a" style="left:1203px;top:714px;width:113px;height:23px;background:#1b1b1b;border-radius:4px"></div>
<div class="a" style="left:1322px;top:713px;width:115px;height:25px;background:#1b1b1b;border-radius:5px;border:1.5px solid #6466b8"></div>
<div class="a" style="left:1084px;top:742px;width:113px;height:22px;background:#1b1b1b;border-radius:4px"></div>
<div class="a" style="left:1203px;top:742px;width:113px;height:22px;background:#1b1b1b;border-radius:4px"></div>
<div class="a" style="left:1323px;top:742px;width:113px;height:22px;background:#1b1b1b;border-radius:4px"></div>
<div class="t fw" style="left:1105px;top:691px;color:#e0e0e0;--w:70px">11.6869 cm</div>
<div class="t fw" style="left:1105px;top:718px;color:#e0e0e0;--w:70px">31.0995 cm</div>
<div class="t fw" style="left:1124px;top:746px;color:#e0e0e0;--w:31px">0 cm</div>
<div class="t" style="left:1250px;top:691px;color:#e0e0e0">0 °</div>
<div class="t" style="left:1250px;top:718px;color:#e0e0e0">0 °</div>
<div class="t" style="left:1250px;top:746px;color:#e0e0e0">0 °</div>
<div class="t fw" style="left:1357px;top:691px;color:#e0e0e0;--w:44px">145 cm</div>
<div class="t fw" style="left:1357px;top:718px;color:#e0e0e0;--w:44px">145 cm</div>
<div class="t fw" style="left:1364px;top:746px;color:#e0e0e0;--w:30px">0 cm</div>
<svg style="left:0;top:0" width="1" height="1">
 <path d="M1067 393.5h18M1067 399.5h18M1067 405.5h18" stroke="#acacac" stroke-width="2.4"/>
 <path d="M1191 395l5 5-5 5" fill="none" stroke="#c0c0c0" stroke-width="1.6"/>
 <g fill="none" stroke="#b8b8b8" stroke-width="1.9" stroke-linecap="round" stroke-linejoin="round">
  <path d="M1264 400h-16M1254 394l-6 6 6 6"/>
  <path d="M1306 408v-16M1300 398l6-6 6 6"/>
  <circle cx="1329" cy="398" r="6"/><path d="M1333.5 402.5l5.5 5.5"/>
  <path d="M1347 392h18M1350 398h12M1353.5 404h5"/>
  <rect x="1374" y="398" width="14" height="11" rx="2"/><path d="M1377 398v-4a4 4 0 0 1 7.5-2"/>
  <circle cx="1406" cy="400" r="9.5"/><circle cx="1406" cy="400" r="3.5"/>
  <path d="M1430 392.5h-7.5v15h15v-7.5M1429 401l9-9M1432 392h6v6"/>
 </g>
 <path d="M1290 400h-16M1280 394l-6 6 6 6" transform="translate(8 0) scale(1)" fill="none" stroke="#4e4e4e" stroke-width="1.9" stroke-linecap="round" stroke-linejoin="round" style="transform:scaleX(-1);transform-origin:1281px 400px"/>
 <circle cx="1381" cy="403.5" r="1.4" fill="#b8b8b8"/>
 <!-- spline icon -->
 <path d="M1080.5 424C1069 426 1069 431 1079 433S1093 439 1080.5 441.4" fill="none" stroke="#6cc8f0" stroke-width="1.6"/>
 <circle cx="1080.5" cy="424" r="2" fill="#f0f0f0"/><circle cx="1080.5" cy="441.4" r="2" fill="#f0f0f0"/>
 <path d="M1418 430.5h9l-4.5 5z" fill="#c8c8c8"/>
 <!-- diamonds -->
 <g fill="#262626"><circle cx="1079" cy="521.5" r="9"/><circle cx="1079" cy="547.5" r="9"/><circle cx="1079" cy="572.5" r="9"/><circle cx="1079" cy="625.5" r="9"/></g>
 <g fill="none" stroke-width="1.5"><path d="M1079 516.5l5 5-5 5-5-5z M1079 542.5l5 5-5 5-5-5z M1079 567.5l5 5-5 5-5-5z M1079 620.5l5 5-5 5-5-5z" stroke="#c4c4c4"/><path d="M1079 593.5l5 5-5 5-5-5z" stroke="#4a4a4a"/></g>
 <path d="M1401 521h9l-4.5 5z M1401 571h9l-4.5 5z" fill="#c8c8c8"/>
 <path d="M1202 548l4 4 7-7.5" fill="none" stroke="#f0f0f0" stroke-width="2"/>
 <!-- coords -->
 <path d="M1067 660h18M1067 665.5h18M1067 671h18" stroke="#f0f0f0" stroke-width="2.2"/>
 <path d="M1325 663h9l-4.5 5z" fill="#c8c8c8"/><path d="M1417 663h9l-4.5 5z" fill="#5a5a5a"/>
</svg>
<!-- magenta arrows -->
<svg style="left:0;top:0" width="1" height="1">
 <g fill="#fa14e0">
  <path d="M1345 701.5L1308.5 674L1334.5 656.5z"/>
  <path d="M1345.8 726.5L1308.5 751L1334 769.5z"/>
 </g>
 <path d="M1313.5 652.5L1323 667M1312.5 773L1321 760" stroke="#fa14e0" stroke-width="6"/>
</svg>
<script>
(function(){var els=document.querySelectorAll('.t');for(var i=0;i<els.length;i++){var e=els[i];if(/^[\x00-\x7F\u00B0]*$/.test(e.textContent)){e.style.webkitTextStroke='0';}if(e.className.indexOf('fw')<0)continue;var w=parseFloat(getComputedStyle(e).getPropertyValue('--w'));if(!w)continue;e.style.width='auto';e.style.overflow='visible';var r=e.getBoundingClientRect().width;if(r>0){e.style.transform='scaleX('+(w/r)+')';}}})();
</script>
</body></html>
